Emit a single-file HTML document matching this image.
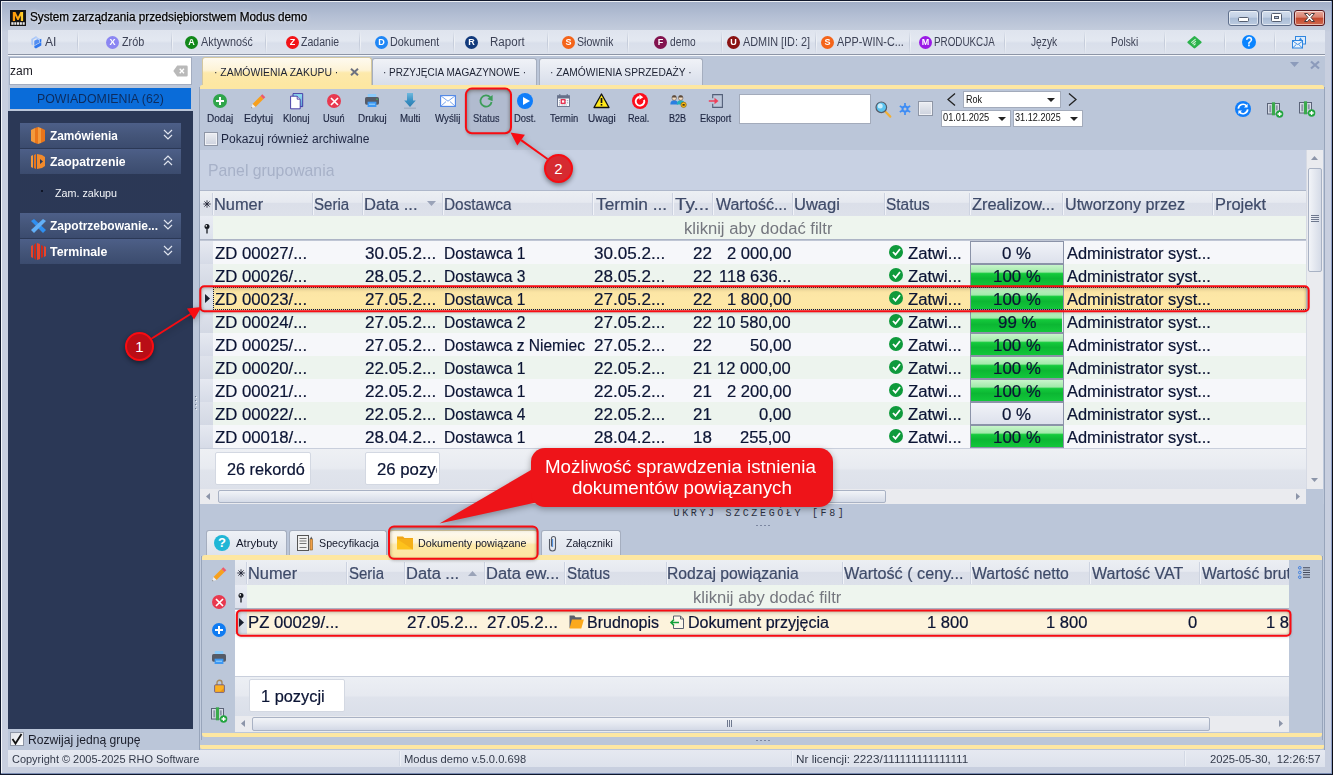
<!DOCTYPE html><html><head><meta charset="utf-8"><title>Modus</title><style>
html,body{margin:0;padding:0;}
body{width:1333px;height:775px;overflow:hidden;position:relative;background:#bbc6d9;font-family:"Liberation Sans",sans-serif;}
div{position:absolute;box-sizing:border-box;}
.t{white-space:nowrap;overflow:hidden;}
svg{position:absolute;overflow:visible;}
</style></head><body>
<div style="left:0px;top:0px;width:1333px;height:775px;background:linear-gradient(#a0adc7 0px,#a6b3cb 4px,#b4bfd4 15px,#c3ccdc 29px,#c8cfdf 31px);border:1px solid #10182c;"></div>
<div style="left:1px;top:1px;width:1331px;height:773px;border:1px solid rgba(255,255,255,.8);border-bottom:none;"></div>
<div style="left:1331px;top:1px;width:1px;height:773px;background:#8c9dc4;"></div>
<div style="left:1332px;top:0px;width:1px;height:775px;background:#0a0c14;"></div>
<div style="left:1px;top:773px;width:1331px;height:1px;background:#7c8db3;"></div>
<div style="left:0px;top:774px;width:1333px;height:1px;background:#10182c;"></div>
<div style="left:8px;top:56px;width:1317px;height:694px;background:#bbc6d9;"></div>
<div style="left:10px;top:10px;width:16px;height:16px;background:#141414;"></div>
<svg style="left:10px;top:10px" width="16" height="16" viewBox="0 0 16 16"><defs><linearGradient id="lg" x1="0" y1="0" x2="1" y2="0"><stop offset="0" stop-color="#ff9a08"/><stop offset=".55" stop-color="#ffa812"/><stop offset="1" stop-color="#ffd830"/></linearGradient></defs><path d="M2.800 11V2.100h2.700l2.450 5 2.450-5h2.700V11h-2.300V5.600L8.600 10H7.300L5.100 5.600V11z" fill="url(#lg)"/><g fill="#e6e6e6"><rect x="1.300" y="12.200" width="2.300" height="2.600"/><rect x="4.300" y="12.200" width="2" height="2.600"/><rect x="7" y="12.200" width="2.200" height="2.600"/><rect x="9.900" y="12.200" width="2" height="2.600"/><rect x="12.600" y="12.200" width="2.100" height="2.600"/></g></svg>
<div class="t" style="left:29.91px;top:9px;font-size:12px;color:#000;line-height:16px;height:16px;transform:scaleX(0.9762);transform-origin:0 50%;-webkit-text-stroke:0.25px;text-shadow:0 0 5px rgba(255,255,255,.8),0 0 3px rgba(255,255,255,.6);overflow:visible;">System zarządzania przedsiębiorstwem Modus demo</div>
<div style="left:1228px;top:10px;width:31px;height:16px;background:linear-gradient(#d3deed 0%,#c3d1e5 45%,#a9bcd6 50%,#bccbe0 100%);border:1px solid #5f6f8c;border-radius:3px;box-shadow:inset 0 0 0 1px rgba(255,255,255,.55);"></div>
<div style="left:1261px;top:10px;width:31px;height:16px;background:linear-gradient(#d3deed 0%,#c3d1e5 45%,#a9bcd6 50%,#bccbe0 100%);border:1px solid #5f6f8c;border-radius:3px;box-shadow:inset 0 0 0 1px rgba(255,255,255,.55);"></div>
<div style="left:1294px;top:10px;width:31px;height:16px;background:linear-gradient(#e9a99c 0%,#d9826f 45%,#c4472d 50%,#cf6a4f 100%);border:1px solid #5a1a20;border-radius:3px;box-shadow:inset 0 0 0 1px rgba(255,255,255,.55);"></div>
<div style="left:1238px;top:17px;width:11px;height:5px;background:#fff;border:1px solid #555e70;border-radius:1.500px;"></div>
<div style="left:1271px;top:13px;width:11px;height:9px;background:#fff;border:1px solid #555e70;border-radius:1.500px;"></div>
<div style="left:1274px;top:16px;width:5px;height:3px;background:#b6c4da;border:1px solid #555e70;"></div>
<svg style="left:1303px;top:12px" width="13" height="11" viewBox="0 0 13 11"><path d="M1.5 1.5h3l2 2.3 2-2.3h3l-3.5 4 3.5 4h-3l-2-2.3-2 2.3h-3l3.5-4z" fill="#fff" stroke="#4b3a3a" stroke-width="1" stroke-linejoin="round"/></svg>
<div style="left:8px;top:30px;width:1317px;height:25px;background:linear-gradient(#dfe4ee 0%,#e3e8f1 45%,#d9dfeb 55%,#dde2ec 100%);border-bottom:1px solid #8d95a6;"></div>
<div style="left:8px;top:55px;width:1317px;height:1px;background:#f4f6fa;"></div>
<div style="left:77px;top:31px;width:1px;height:23px;background:linear-gradient(rgba(200,207,221,0),#c6cddb 40%,#c6cddb 60%,rgba(200,207,221,0));"></div>
<div style="left:78px;top:31px;width:1px;height:23px;background:linear-gradient(rgba(255,255,255,0),#eef1f6 40%,#eef1f6 60%,rgba(255,255,255,0));"></div>
<div style="left:171px;top:31px;width:1px;height:23px;background:linear-gradient(rgba(200,207,221,0),#c6cddb 40%,#c6cddb 60%,rgba(200,207,221,0));"></div>
<div style="left:172px;top:31px;width:1px;height:23px;background:linear-gradient(rgba(255,255,255,0),#eef1f6 40%,#eef1f6 60%,rgba(255,255,255,0));"></div>
<div style="left:265px;top:31px;width:1px;height:23px;background:linear-gradient(rgba(200,207,221,0),#c6cddb 40%,#c6cddb 60%,rgba(200,207,221,0));"></div>
<div style="left:266px;top:31px;width:1px;height:23px;background:linear-gradient(rgba(255,255,255,0),#eef1f6 40%,#eef1f6 60%,rgba(255,255,255,0));"></div>
<div style="left:359px;top:31px;width:1px;height:23px;background:linear-gradient(rgba(200,207,221,0),#c6cddb 40%,#c6cddb 60%,rgba(200,207,221,0));"></div>
<div style="left:360px;top:31px;width:1px;height:23px;background:linear-gradient(rgba(255,255,255,0),#eef1f6 40%,#eef1f6 60%,rgba(255,255,255,0));"></div>
<div style="left:453px;top:31px;width:1px;height:23px;background:linear-gradient(rgba(200,207,221,0),#c6cddb 40%,#c6cddb 60%,rgba(200,207,221,0));"></div>
<div style="left:454px;top:31px;width:1px;height:23px;background:linear-gradient(rgba(255,255,255,0),#eef1f6 40%,#eef1f6 60%,rgba(255,255,255,0));"></div>
<div style="left:547px;top:31px;width:1px;height:23px;background:linear-gradient(rgba(200,207,221,0),#c6cddb 40%,#c6cddb 60%,rgba(200,207,221,0));"></div>
<div style="left:548px;top:31px;width:1px;height:23px;background:linear-gradient(rgba(255,255,255,0),#eef1f6 40%,#eef1f6 60%,rgba(255,255,255,0));"></div>
<div style="left:627px;top:31px;width:1px;height:23px;background:linear-gradient(rgba(200,207,221,0),#c6cddb 40%,#c6cddb 60%,rgba(200,207,221,0));"></div>
<div style="left:628px;top:31px;width:1px;height:23px;background:linear-gradient(rgba(255,255,255,0),#eef1f6 40%,#eef1f6 60%,rgba(255,255,255,0));"></div>
<div style="left:721px;top:31px;width:1px;height:23px;background:linear-gradient(rgba(200,207,221,0),#c6cddb 40%,#c6cddb 60%,rgba(200,207,221,0));"></div>
<div style="left:722px;top:31px;width:1px;height:23px;background:linear-gradient(rgba(255,255,255,0),#eef1f6 40%,#eef1f6 60%,rgba(255,255,255,0));"></div>
<div style="left:815px;top:31px;width:1px;height:23px;background:linear-gradient(rgba(200,207,221,0),#c6cddb 40%,#c6cddb 60%,rgba(200,207,221,0));"></div>
<div style="left:816px;top:31px;width:1px;height:23px;background:linear-gradient(rgba(255,255,255,0),#eef1f6 40%,#eef1f6 60%,rgba(255,255,255,0));"></div>
<div style="left:909px;top:31px;width:1px;height:23px;background:linear-gradient(rgba(200,207,221,0),#c6cddb 40%,#c6cddb 60%,rgba(200,207,221,0));"></div>
<div style="left:910px;top:31px;width:1px;height:23px;background:linear-gradient(rgba(255,255,255,0),#eef1f6 40%,#eef1f6 60%,rgba(255,255,255,0));"></div>
<div style="left:1004px;top:31px;width:1px;height:23px;background:linear-gradient(rgba(200,207,221,0),#c6cddb 40%,#c6cddb 60%,rgba(200,207,221,0));"></div>
<div style="left:1005px;top:31px;width:1px;height:23px;background:linear-gradient(rgba(255,255,255,0),#eef1f6 40%,#eef1f6 60%,rgba(255,255,255,0));"></div>
<div style="left:1084px;top:31px;width:1px;height:23px;background:linear-gradient(rgba(200,207,221,0),#c6cddb 40%,#c6cddb 60%,rgba(200,207,221,0));"></div>
<div style="left:1085px;top:31px;width:1px;height:23px;background:linear-gradient(rgba(255,255,255,0),#eef1f6 40%,#eef1f6 60%,rgba(255,255,255,0));"></div>
<div style="left:1164px;top:31px;width:1px;height:23px;background:linear-gradient(rgba(200,207,221,0),#c6cddb 40%,#c6cddb 60%,rgba(200,207,221,0));"></div>
<div style="left:1165px;top:31px;width:1px;height:23px;background:linear-gradient(rgba(255,255,255,0),#eef1f6 40%,#eef1f6 60%,rgba(255,255,255,0));"></div>
<div style="left:1224px;top:31px;width:1px;height:23px;background:linear-gradient(rgba(200,207,221,0),#c6cddb 40%,#c6cddb 60%,rgba(200,207,221,0));"></div>
<div style="left:1225px;top:31px;width:1px;height:23px;background:linear-gradient(rgba(255,255,255,0),#eef1f6 40%,#eef1f6 60%,rgba(255,255,255,0));"></div>
<div style="left:1274px;top:31px;width:1px;height:23px;background:linear-gradient(rgba(200,207,221,0),#c6cddb 40%,#c6cddb 60%,rgba(200,207,221,0));"></div>
<div style="left:1275px;top:31px;width:1px;height:23px;background:linear-gradient(rgba(255,255,255,0),#eef1f6 40%,#eef1f6 60%,rgba(255,255,255,0));"></div>
<div style="left:106.2px;top:35.5px;width:13.0px;height:13.0px;background:#8b86f2;border-radius:50%;"></div><div class="t" style="left:106.2px;top:35.5px;font-size:9px;color:#fff;line-height:13.0px;height:13.0px;width:13.0px;text-align:center;font-weight:bold;transform:scaleX(1.001);">X</div>
<div class="t" style="left:121.56px;top:34px;font-size:12px;color:#3d4256;line-height:16px;height:16px;transform:scaleX(0.9000);transform-origin:0 50%;">Zrób</div>
<div style="left:185.2px;top:35.5px;width:13.0px;height:13.0px;background:#12881a;border-radius:50%;"></div><div class="t" style="left:185.2px;top:35.5px;font-size:9px;color:#fff;line-height:13.0px;height:13.0px;width:13.0px;text-align:center;font-weight:bold;transform:scaleX(1.001);">A</div>
<div class="t" style="left:200.90px;top:34px;font-size:12px;color:#3d4256;line-height:16px;height:16px;transform:scaleX(0.9049);transform-origin:0 50%;">Aktywność</div>
<div style="left:286.4px;top:35.5px;width:13.0px;height:13.0px;background:#f21418;border-radius:50%;"></div><div class="t" style="left:286.4px;top:35.5px;font-size:9px;color:#fff;line-height:13.0px;height:13.0px;width:13.0px;text-align:center;font-weight:bold;transform:scaleX(1.001);">Z</div>
<div class="t" style="left:301.37px;top:34px;font-size:12px;color:#3d4256;line-height:16px;height:16px;transform:scaleX(0.8798);transform-origin:0 50%;">Zadanie</div>
<div style="left:375.2px;top:35.5px;width:13.0px;height:13.0px;background:#1f86f5;border-radius:50%;"></div><div class="t" style="left:375.2px;top:35.5px;font-size:9px;color:#fff;line-height:13.0px;height:13.0px;width:13.0px;text-align:center;font-weight:bold;transform:scaleX(1.001);">D</div>
<div class="t" style="left:389.50px;top:34px;font-size:12px;color:#3d4256;line-height:16px;height:16px;transform:scaleX(0.8986);transform-origin:0 50%;">Dokument</div>
<div style="left:465.3px;top:35.5px;width:13.0px;height:13.0px;background:#123a7c;border-radius:50%;"></div><div class="t" style="left:465.3px;top:35.5px;font-size:9px;color:#fff;line-height:13.0px;height:13.0px;width:13.0px;text-align:center;font-weight:bold;transform:scaleX(1.001);">R</div>
<div class="t" style="left:490.34px;top:34px;font-size:12px;color:#3d4256;line-height:16px;height:16px;transform:scaleX(0.9631);transform-origin:0 50%;">Raport</div>
<div style="left:562.2px;top:35.5px;width:13.0px;height:13.0px;background:#f4641a;border-radius:50%;"></div><div class="t" style="left:562.2px;top:35.5px;font-size:9px;color:#fff;line-height:13.0px;height:13.0px;width:13.0px;text-align:center;font-weight:bold;transform:scaleX(1.001);">S</div>
<div class="t" style="left:577.06px;top:34px;font-size:12px;color:#3d4256;line-height:16px;height:16px;transform:scaleX(0.8830);transform-origin:0 50%;">Słownik</div>
<div style="left:654.3px;top:35.5px;width:13.0px;height:13.0px;background:#82134f;border-radius:50%;"></div><div class="t" style="left:654.3px;top:35.5px;font-size:9px;color:#fff;line-height:13.0px;height:13.0px;width:13.0px;text-align:center;font-weight:bold;transform:scaleX(1.001);">F</div>
<div class="t" style="left:669.77px;top:34px;font-size:12px;color:#3d4256;line-height:16px;height:16px;transform:scaleX(0.8545);transform-origin:0 50%;">demo</div>
<div style="left:727.2px;top:35.5px;width:13.0px;height:13.0px;background:#8a1212;border-radius:50%;"></div><div class="t" style="left:727.2px;top:35.5px;font-size:9px;color:#fff;line-height:13.0px;height:13.0px;width:13.0px;text-align:center;font-weight:bold;transform:scaleX(1.001);">U</div>
<div class="t" style="left:743.00px;top:34px;font-size:12px;color:#3d4256;line-height:16px;height:16px;transform:scaleX(0.9066);transform-origin:0 50%;">ADMIN [ID: 2]</div>
<div style="left:821.4px;top:35.5px;width:13.0px;height:13.0px;background:#f4641a;border-radius:50%;"></div><div class="t" style="left:821.4px;top:35.5px;font-size:9px;color:#fff;line-height:13.0px;height:13.0px;width:13.0px;text-align:center;font-weight:bold;transform:scaleX(1.001);">S</div>
<div class="t" style="left:837.00px;top:34px;font-size:12px;color:#3d4256;line-height:16px;height:16px;transform:scaleX(0.9029);transform-origin:0 50%;">APP-WIN-C...</div>
<div style="left:919.4px;top:35.5px;width:13.0px;height:13.0px;background:#9a1ae6;border-radius:50%;"></div><div class="t" style="left:919.4px;top:35.5px;font-size:9px;color:#fff;line-height:13.0px;height:13.0px;width:13.0px;text-align:center;font-weight:bold;transform:scaleX(1.001);">M</div>
<div class="t" style="left:933.58px;top:34px;font-size:12px;color:#3d4256;line-height:16px;height:16px;transform:scaleX(0.8205);transform-origin:0 50%;">PRODUKCJA</div>
<div class="t" style="left:44.90px;top:34px;font-size:12px;color:#3d4256;line-height:16px;height:16px;transform:scaleX(1.0043);transform-origin:0 50%;">AI</div>
<div class="t" style="left:1031.19px;top:34px;font-size:12px;color:#3d4256;line-height:16px;height:16px;transform:scaleX(0.8521);transform-origin:0 50%;">Język</div>
<div class="t" style="left:1110.65px;top:34px;font-size:12px;color:#3d4256;line-height:16px;height:16px;transform:scaleX(0.8494);transform-origin:0 50%;">Polski</div>
<svg style="left:31px;top:36px" width="11" height="13" viewBox="0 0 11 13"><path d="M.3 3l4.700-2.700 1.500.9-4.400 2.500v5.800l-1.800-1z" fill="#a8c6f8"/><path d="M4.500.5l5.800 3v1.500l-5.800-3z" fill="#b4cefa"/><path d="M3.300 4.800l3-1.600 1.800 1v2.600l-2.400 1.300-2.400 1.300z" fill="#3a7ff2" opacity=".85"/><path d="M8.700 3.600l1.600-.8v3l-1.600 1.400z" fill="#2f78f0"/><path d="M3.300 10l7-3.800v3.300l-5.400 3-1.600-.9z" fill="#2f78f0"/></svg>
<svg style="left:1186.500px;top:35.800px" width="15" height="12.500" viewBox="0 0 15 12.500"><path d="M6.600 .5a1.300 1.300 0 0 1 1.800 0l5.900 5a1 1 0 0 1 0 1.500l-5.900 5a1.300 1.300 0 0 1-1.800 0l-5.900-5a1 1 0 0 1 0-1.500z" fill="#2bb24c"/><path d="M4.600 6.300l3.600-3M5.800 7.700l2.800-2.300M7 9l1.300-1.100" stroke="#d4f3da" stroke-width="1.100" stroke-linecap="round"/></svg>
<div style="left:1242px;top:35px;width:14px;height:14px;background:#0a84ff;border-radius:50%;"></div>
<div class="t" style="left:1242px;top:35px;font-size:12px;color:#fff;line-height:14px;height:14px;width:14px;text-align:center;transform:scaleX(1.001);-webkit-text-stroke:0.3px;">?</div>
<svg style="left:1292px;top:36px" width="15" height="13" viewBox="0 0 15 13"><rect x="3.5" y=".5" width="10" height="7.5" fill="#dcebfb" stroke="#2f86e0"/><rect x=".5" y="4.5" width="10" height="7.5" fill="#eaf3fd" stroke="#2f86e0"/><path d="M.8 5l5 3.6 5-3.6M.8 11.8l3.6-3.4M10.2 11.8l-3.6-3.4" fill="none" stroke="#2f86e0" stroke-width=".9"/><path d="M8.5 1.8v3M7 3.3h3" stroke="#2f86e0" stroke-width=".9"/></svg>
<div style="left:9px;top:57px;width:183px;height:28px;background:#fff;border:1px solid #a3adc0;"></div>
<div class="t" style="left:10.34px;top:62px;font-size:13px;color:#1a1a22;line-height:17px;height:17px;transform:scaleX(0.9247);transform-origin:0 50%;">zam</div>
<svg style="left:173px;top:65px" width="15" height="12" viewBox="0 0 15 12"><path d="M4.2.5h9.3a1.2 1.2 0 0 1 1.200 1.200v8.600a1.2 1.2 0 0 1-1.200 1.200h-9.300l-3.900-5.500z" fill="#b9b9b9"/><path d="M6.700 3.700l4.300 4.600M11 3.700l-4.300 4.600" stroke="#fff" stroke-width="1.300"/></svg>
<div style="left:10px;top:88px;width:181px;height:21px;background:#0a6cd9;"></div>
<div class="t" style="left:36.55px;top:90px;font-size:13px;color:#0d2c5e;line-height:17px;height:17px;transform:scaleX(0.9487);transform-origin:0 50%;">POWIADOMIENIA (62)</div>
<div style="left:8px;top:111px;width:185px;height:618px;background:#2b3856;"></div>
<div style="left:20px;top:123px;width:161px;height:25px;background:linear-gradient(#4d5f88 0%,#445579 50%,#3b4b6e 100%);"></div><div class="t" style="left:49.76px;top:127px;font-size:13px;color:#fff;line-height:17px;height:17px;font-weight:bold;transform:scaleX(0.9118);transform-origin:0 50%;">Zamówienia</div><svg style="left:0;top:0" width="1" height="1"><path d="M164 130l4 4 4-4M164 135l4 4 4-4" fill="none" stroke="#dfe4ef" stroke-width="1.2"/></svg>
<div style="left:20px;top:149px;width:161px;height:25px;background:linear-gradient(#4d5f88 0%,#445579 50%,#3b4b6e 100%);"></div><div class="t" style="left:49.75px;top:153px;font-size:13px;color:#fff;line-height:17px;height:17px;font-weight:bold;transform:scaleX(0.9434);transform-origin:0 50%;">Zaopatrzenie</div><svg style="left:0;top:0" width="1" height="1"><path d="M164 160l4-4 4 4M164 165l4-4 4 4" fill="none" stroke="#dfe4ef" stroke-width="1.2"/></svg>
<div style="left:20px;top:174px;width:161px;height:39px;background:#293552;background-image:radial-gradient(#323f5e 0.6px,transparent 0.75px);background-size:2px 2px;"></div>
<div style="left:41px;top:190px;width:2px;height:2px;background:#0f1526;"></div>
<div class="t" style="left:55.13px;top:186px;font-size:11px;color:#f4f6fa;line-height:14px;height:14px;transform:scaleX(0.9758);transform-origin:0 50%;">Zam. zakupu</div>
<div style="left:20px;top:213px;width:161px;height:25px;background:linear-gradient(#4d5f88 0%,#445579 50%,#3b4b6e 100%);"></div><div class="t" style="left:49.75px;top:217px;font-size:13px;color:#fff;line-height:17px;height:17px;font-weight:bold;transform:scaleX(0.9227);transform-origin:0 50%;">Zapotrzebowanie...</div><svg style="left:0;top:0" width="1" height="1"><path d="M164 220l4 4 4-4M164 225l4 4 4-4" fill="none" stroke="#dfe4ef" stroke-width="1.2"/></svg>
<div style="left:20px;top:239px;width:161px;height:25px;background:linear-gradient(#4d5f88 0%,#445579 50%,#3b4b6e 100%);"></div><div class="t" style="left:49.98px;top:243px;font-size:13px;color:#fff;line-height:17px;height:17px;font-weight:bold;transform:scaleX(0.9499);transform-origin:0 50%;">Terminale</div><svg style="left:0;top:0" width="1" height="1"><path d="M164 246l4 4 4-4M164 251l4 4 4-4" fill="none" stroke="#dfe4ef" stroke-width="1.2"/></svg>
<svg style="left:31px;top:127px" width="14" height="17" viewBox="0 0 14 17"><path d="M0 3l4-2v15l-4-2z" fill="#f39a3c"/><path d="M4 1l3-1v17l-3-1z" fill="#e9751a"/><path d="M7 0l3 1v15l-3 1z" fill="#f39a3c"/><path d="M10 1l4 2v11l-4 2z" fill="#e9751a"/></svg>
<svg style="left:31px;top:153px" width="15" height="17" viewBox="0 0 15 17"><path d="M0 3l2-1v13l-2-1z" fill="#f39a3c"/><path d="M3 2l2-1v15l-2-1z" fill="#e9751a"/><path d="M6 1l5 1 3 2v9l-3 2-5 1z" fill="#f08a2c"/><path d="M9 6l3 2.500-3 2.500z" fill="#2b3856"/></svg>
<svg style="left:29.500px;top:217.500px" width="17" height="16" viewBox="0 0 17 16"><path d="M1 3l3-2 12 11-3 3z" fill="#2f8ff0"/><path d="M13 1l3 2-12 12-3-3z" fill="#63b0f7"/></svg>
<svg style="left:31px;top:242.500px" width="15" height="17" viewBox="0 0 15 17"><path d="M0 3l2-1v13l-2-1z" fill="#e8452c"/><path d="M3 2l2-2v17l-2-2z" fill="#c92a1a"/><path d="M6 0l3 1v15l-3 1z" fill="#e8452c"/><path d="M10 2l2 1v11l-2 1z" fill="#c92a1a"/><path d="M13 3l2 1v9l-2 1z" fill="#e8452c"/></svg>
<div style="left:10px;top:732px;width:14px;height:14px;background:linear-gradient(135deg,#dfe2e8,#fff);border:1px solid #8e96a6;"></div>
<svg style="left:11px;top:733px" width="12" height="12" viewBox="0 0 12 12"><path d="M1.500 6l3 4.500 6-9.500" fill="none" stroke="#111" stroke-width="1.800"/></svg>
<div class="t" style="left:27.89px;top:732px;font-size:12px;color:#1a1d2a;line-height:16px;height:16px;transform:scaleX(1.0102);transform-origin:0 50%;">Rozwijaj jedną grupę</div>
<div style="left:195px;top:396px;width:1px;height:1px;background:#6d7890;"></div>
<div style="left:196px;top:397px;width:1px;height:1px;background:#eef1f6;"></div>
<div style="left:195px;top:400px;width:1px;height:1px;background:#6d7890;"></div>
<div style="left:196px;top:401px;width:1px;height:1px;background:#eef1f6;"></div>
<div style="left:195px;top:404px;width:1px;height:1px;background:#6d7890;"></div>
<div style="left:196px;top:405px;width:1px;height:1px;background:#eef1f6;"></div>
<div style="left:195px;top:408px;width:1px;height:1px;background:#6d7890;"></div>
<div style="left:196px;top:409px;width:1px;height:1px;background:#eef1f6;"></div>
<div style="left:8px;top:750px;width:1317px;height:17px;background:linear-gradient(#e6e9f1,#dde2ec);"></div>
<div class="t" style="left:12.20px;top:752px;font-size:11px;color:#333a4a;line-height:14px;height:14px;transform:scaleX(0.9969);transform-origin:0 50%;">Copyright © 2005-2025 RHO Software</div>
<div class="t" style="left:403.51px;top:752px;font-size:11px;color:#333a4a;line-height:14px;height:14px;transform:scaleX(1.0153);transform-origin:0 50%;">Modus demo v.5.0.0.698</div>
<div class="t" style="left:795.77px;top:752px;font-size:11px;color:#333a4a;line-height:14px;height:14px;transform:scaleX(1.0657);transform-origin:0 50%;">Nr licencji: 2223/111111111111111</div>
<div class="t" style="left:1209.79px;top:752px;font-size:11px;color:#333a4a;line-height:14px;height:14px;transform:scaleX(1.0208);transform-origin:0 50%;">2025-05-30,&nbsp; 12:26:57</div>
<div style="left:399px;top:751px;width:1px;height:15px;background:#d3d9e5;"></div>
<div style="left:400px;top:751px;width:1px;height:15px;background:#edf0f6;"></div>
<div style="left:791px;top:751px;width:1px;height:15px;background:#d3d9e5;"></div>
<div style="left:792px;top:751px;width:1px;height:15px;background:#edf0f6;"></div>
<div style="left:1184px;top:751px;width:1px;height:15px;background:#d3d9e5;"></div>
<div style="left:1185px;top:751px;width:1px;height:15px;background:#edf0f6;"></div>
<div style="left:372px;top:58px;width:165px;height:27px;background:linear-gradient(#f0f2f7,#d8deea);border:1px solid #a5aebf;border-bottom:none;border-radius:3px 3px 0 0;"></div><div class="t" style="left:383.16px;top:65px;font-size:11px;color:#1d2233;line-height:14px;height:14px;transform:scaleX(0.9113);transform-origin:0 50%;">· PRZYJĘCIA MAGAZYNOWE ·</div>
<div style="left:539px;top:58px;width:164px;height:27px;background:linear-gradient(#f0f2f7,#d8deea);border:1px solid #a5aebf;border-bottom:none;border-radius:3px 3px 0 0;"></div><div class="t" style="left:549.84px;top:65px;font-size:11px;color:#1d2233;line-height:14px;height:14px;transform:scaleX(0.9287);transform-origin:0 50%;">· ZAMÓWIENIA SPRZEDAŻY ·</div>
<div style="left:202px;top:57px;width:170px;height:28px;background:linear-gradient(#fefaf0 0%,#fdf3d6 45%,#fde9ab 55%,#fde7a2 100%);border:1px solid #d3c79f;border-bottom:none;border-radius:3px 3px 0 0;"></div>
<div class="t" style="left:214.42px;top:65px;font-size:11px;color:#1d2233;line-height:14px;height:14px;transform:scaleX(0.9458);transform-origin:0 50%;">· ZAMÓWIENIA ZAKUPU ·</div>
<svg style="left:350px;top:68px" width="9" height="8" viewBox="0 0 9 8"><path d="M1 .8l7 6.400M8 .8l-7 6.400" stroke="#6c7080" stroke-width="2"/></svg>
<div style="left:200px;top:85px;width:1124px;height:4px;background:#fde7a2;border-radius:2px 2px 0 0;"></div>
<svg style="left:1290px;top:62px" width="9" height="5" viewBox="0 0 9 5"><path d="M0 0h9l-4.500 5z" fill="#8c9bbb"/></svg>
<svg style="left:1310px;top:61px" width="10" height="8" viewBox="0 0 10 8"><path d="M1 .5l8 7M9 .5l-8 7" stroke="#8c9bbb" stroke-width="2.200"/></svg>
<div class="t" style="left:206.65px;top:112px;font-size:10px;color:#1d2540;line-height:13px;height:13px;transform:scaleX(1.0017);transform-origin:0 50%;-webkit-text-stroke:0.15px;">Dodaj</div>
<div class="t" style="left:243.72px;top:112px;font-size:10px;color:#1d2540;line-height:13px;height:13px;transform:scaleX(1.0453);transform-origin:0 50%;-webkit-text-stroke:0.15px;">Edytuj</div>
<div class="t" style="left:282.78px;top:112px;font-size:10px;color:#1d2540;line-height:13px;height:13px;transform:scaleX(0.9544);transform-origin:0 50%;-webkit-text-stroke:0.15px;">Klonuj</div>
<div class="t" style="left:323.20px;top:112px;font-size:10px;color:#1d2540;line-height:13px;height:13px;transform:scaleX(0.9268);transform-origin:0 50%;-webkit-text-stroke:0.15px;">Usuń</div>
<div class="t" style="left:357.66px;top:112px;font-size:10px;color:#1d2540;line-height:13px;height:13px;transform:scaleX(0.9925);transform-origin:0 50%;-webkit-text-stroke:0.15px;">Drukuj</div>
<div class="t" style="left:400.17px;top:112px;font-size:10px;color:#1d2540;line-height:13px;height:13px;transform:scaleX(0.9667);transform-origin:0 50%;-webkit-text-stroke:0.15px;">Multi</div>
<div class="t" style="left:434.90px;top:112px;font-size:10px;color:#1d2540;line-height:13px;height:13px;transform:scaleX(0.9735);transform-origin:0 50%;-webkit-text-stroke:0.15px;">Wyślij</div>
<div class="t" style="left:472.83px;top:112px;font-size:10px;color:#1d2540;line-height:13px;height:13px;transform:scaleX(0.9416);transform-origin:0 50%;-webkit-text-stroke:0.15px;">Status</div>
<div class="t" style="left:514.09px;top:112px;font-size:10px;color:#1d2540;line-height:13px;height:13px;transform:scaleX(0.9425);transform-origin:0 50%;-webkit-text-stroke:0.15px;">Dost.</div>
<div class="t" style="left:549.76px;top:112px;font-size:10px;color:#1d2540;line-height:13px;height:13px;transform:scaleX(0.9434);transform-origin:0 50%;-webkit-text-stroke:0.15px;">Termin</div>
<div class="t" style="left:587.65px;top:112px;font-size:10px;color:#1d2540;line-height:13px;height:13px;transform:scaleX(0.9999);transform-origin:0 50%;-webkit-text-stroke:0.15px;">Uwagi</div>
<div class="t" style="left:628.21px;top:112px;font-size:10px;color:#1d2540;line-height:13px;height:13px;transform:scaleX(0.9145);transform-origin:0 50%;-webkit-text-stroke:0.15px;">Real.</div>
<div class="t" style="left:668.82px;top:112px;font-size:10px;color:#1d2540;line-height:13px;height:13px;transform:scaleX(0.9076);transform-origin:0 50%;-webkit-text-stroke:0.15px;">B2B</div>
<div class="t" style="left:699.61px;top:112px;font-size:10px;color:#1d2540;line-height:13px;height:13px;transform:scaleX(0.9237);transform-origin:0 50%;-webkit-text-stroke:0.15px;">Eksport</div>
<div style="left:213px;top:94px;width:14px;height:14px;background:#2fa54a;border-radius:50%;"></div>
<div style="left:216px;top:100px;width:8px;height:2px;background:#fff;"></div>
<div style="left:219px;top:97px;width:2px;height:8px;background:#fff;"></div>
<svg style="left:250px;top:93px" width="16" height="16" viewBox="0 0 16 16"><path d="M2.500 11l8-8 3 3-8 8z" fill="#f7a01d"/><path d="M10.500 3l1.800-1.800 3 3L13.500 6z" fill="#ef5a6a"/><path d="M2.500 11l3 3-4.300 1.300z" fill="#f4f0ea"/><path d="M1.200 15.300l1.300-.4-.9-.9z" fill="#555"/></svg>
<svg style="left:289.500px;top:92.700px" width="14" height="17" viewBox="0 0 14 17"><defs><linearGradient id="kg" x1="0" y1="0" x2="0" y2="1"><stop offset="0" stop-color="#93e0f2"/><stop offset="1" stop-color="#5f9fd6"/></linearGradient></defs><path d="M3 .6h9.700v13h-9.700z" fill="url(#kg)" stroke="#3a2fa0" stroke-width=".9"/><path d="M.6 3.200h6.600l3 3v9.600h-9.600z" fill="#fff" stroke="#3a2fa0" stroke-width=".9"/><path d="M7.200 3.200v3h3" fill="#e6e9f5" stroke="#3a2fa0" stroke-width=".8"/></svg>
<div style="left:327px;top:94px;width:14px;height:14px;background:#e8394f;border-radius:50%;"></div>
<svg style="left:329.500px;top:96.500px" width="9" height="9" viewBox="0 0 9 9"><path d="M1 1l7 7M8 1l-7 7" stroke="#fff" stroke-width="1.700"/></svg>
<svg style="left:365px;top:94px" width="14" height="13" viewBox="0 0 14 13"><rect x="2.800" y="0" width="8.400" height="4" fill="#8ccbfa"/><rect x="0" y="3" width="14" height="7.700" rx="1.600" fill="#555b67"/><rect x="2.600" y="7.700" width="8.800" height="5.300" fill="#3d98f3"/><rect x="4" y="9.600" width="6" height="1.300" fill="#8ccbfa"/><rect x="11.300" y="4.600" width="1.300" height="1.200" fill="#3fbf5a"/></svg>
<svg style="left:404px;top:93px" width="12" height="16" viewBox="0 0 12 16"><defs><linearGradient id="mg" x1="0" y1="0" x2="0" y2="1"><stop offset="0" stop-color="#6fb9de"/><stop offset=".5" stop-color="#3b93c6"/><stop offset="1" stop-color="#2b7cae"/></linearGradient></defs><path d="M3 0h6v7.500h2.800l-5.800 6.500-5.800-6.500h2.800z" fill="url(#mg)"/><rect x="0" y="14.600" width="12" height="1.200" fill="#9aa6bb" opacity=".8"/></svg>
<svg style="left:440px;top:95px" width="16" height="12" viewBox="0 0 16 12"><rect x=".6" y=".6" width="14.800" height="10.800" fill="#fff" stroke="#4f86e6" stroke-width="1.100"/><path d="M.8.800l7.200 5.400 7.200-5.400M.8 11.200l5.200-4.600M15.200 11.200l-5.200-4.600" fill="none" stroke="#6a98ea" stroke-width=".9"/></svg>
<svg style="left:477.800px;top:92.600px" width="16" height="16" viewBox="0 0 16 16"><path d="M12.300 4.400A5.600 5.600 0 1 0 13.550 9" fill="none" stroke="#3aa455" stroke-width="1.800"/><path d="M9.300 6l5.300-3.900v6.200z" fill="#3aa455"/></svg>
<div style="left:517px;top:93px;width:16px;height:16px;background:#0f7dfa;border-radius:50%;"></div>
<svg style="left:522.500px;top:97.300px" width="7" height="8" viewBox="0 0 7 8"><path d="M0 0l7 4-7 4z" fill="#fff"/></svg>
<svg style="left:557px;top:94px" width="13" height="13" viewBox="0 0 13 13"><rect x=".5" y="1.700" width="12" height="10.800" fill="#fbfbfd" stroke="#66718a" stroke-width=".9"/><rect x=".5" y="1.700" width="12" height="2.800" fill="#66718a"/><path d="M2.800 0v2.500M10.200 0v2.500" stroke="#66718a" stroke-width="1.100"/><g fill="#a9b0c0"><rect x="2" y="6" width="1.200" height="1.200"/><rect x="8" y="6" width="1.200" height="1.200"/><rect x="10" y="6" width="1.200" height="1.200"/><rect x="2" y="8.200" width="1.200" height="1.200"/><rect x="8" y="8.200" width="1.200" height="1.200"/><rect x="10" y="8.200" width="1.200" height="1.200"/><rect x="2" y="10.300" width="1.200" height="1.200"/><rect x="4.500" y="10.300" width="1.200" height="1.200"/><rect x="6.500" y="10.300" width="1.200" height="1.200"/><rect x="8.500" y="10.300" width="1.200" height="1.200"/></g><rect x="4.300" y="5.700" width="3.600" height="3.600" fill="#fff" stroke="#e8294a" stroke-width="1.300"/></svg>
<svg style="left:593px;top:93px" width="17" height="15" viewBox="0 0 17 15"><path d="M8.500 1l7.500 13.500h-15z" fill="#ffe81a" stroke="#111" stroke-width="1.300" stroke-linejoin="round"/><path d="M8.500 5v5" stroke="#111" stroke-width="1.700"/><rect x="7.700" y="11" width="1.600" height="1.600" fill="#111"/></svg>
<div style="left:631.7px;top:93px;width:16px;height:16px;background:#fb0d1b;border-radius:50%;"></div>
<svg style="left:631.700px;top:93px" width="16" height="16" viewBox="0 0 16 16"><path d="M12.040 6.830A4.300 4.300 0 1 1 7.600 4.020" fill="none" stroke="#fff" stroke-width="1.900"/><path d="M7.400 1.500l3.800 2.700-3.800 2.500z" fill="#fff"/></svg>
<svg style="left:670px;top:94.500px" width="17" height="13" viewBox="0 0 17 13"><path d="M.3 9.500c0-3 1.500-4.300 3.900-4.300s3.900 1.300 3.900 4.300z" fill="#2a7fe2"/><path d="M6.800 9.500c0-3 1.500-4.300 3.900-4.300s3.900 1.300 3.900 4.300z" fill="#20aebf"/><circle cx="4.200" cy="3" r="2.300" fill="#f4dcc2" stroke="#5b4a3c" stroke-width=".5"/><path d="M1.900 2.600a2.300 2.300 0 0 1 4.600 0c-1.500-.2-3-.2-4.600 0z" fill="#5b4a3c"/><circle cx="10.700" cy="3" r="2.300" fill="#f4dcc2" stroke="#5b4a3c" stroke-width=".5"/><path d="M8.400 2.600a2.300 2.300 0 0 1 4.600 0c-1.500-.2-3-.2-4.600 0z" fill="#5b4a3c"/><circle cx="13.600" cy="9.800" r="2.700" fill="#f6b818" stroke="#7a5a08" stroke-width=".6"/><rect x="12.500" y="9" width="2.200" height="1.700" fill="#4a3a10"/></svg>
<svg style="left:708px;top:94px" width="15" height="14" viewBox="0 0 15 14"><path d="M4.700 4.200v-3.600h9.700v12.800h-9.700v-3.600" fill="none" stroke="#525e77" stroke-width="1.100"/><path d="M.8 7h7" stroke="#ee3d57" stroke-width="1.500"/><path d="M6.500 3.800l4 3.200-4 3.200z" fill="#ee3d57"/></svg>
<div style="left:739px;top:94px;width:132px;height:30px;background:#fff;border:1px solid #a3abbb;"></div>
<svg style="left:875px;top:101px" width="17" height="17" viewBox="0 0 17 17"><path d="M10.500 10.800l4.800 4.800" stroke="#f2b035" stroke-width="2.200" stroke-linecap="round"/><circle cx="6.300" cy="6.300" r="5.300" fill="#5cc4f0" stroke="#555b68" stroke-width="1.200"/><circle cx="5.200" cy="5" r="2.500" fill="#c9eefc"/></svg>
<svg style="left:899px;top:103px" width="12" height="12" viewBox="0 0 12 12"><g stroke="#3d8cf5" stroke-width="1.700"><path d="M6 0v12M.8 3l10.400 6M.8 9l10.400-6"/></g><circle cx="6" cy="6" r="3.500" fill="#3d8cf5"/><circle cx="6" cy="6" r="1.500" fill="#bbc6d9"/></svg>
<div style="left:918px;top:101px;width:15px;height:15px;background:linear-gradient(#eceef2,#cdd2de);border:1px solid #8e96a6;box-shadow:inset 0 0 0 1px #f1f2f6;"></div>
<svg style="left:947px;top:93px" width="9" height="13" viewBox="0 0 9 13"><path d="M8 .5l-7 6 7 6" fill="none" stroke="#222" stroke-width="1.300"/></svg>
<svg style="left:1068px;top:93px" width="9" height="13" viewBox="0 0 9 13"><path d="M1 .5l7 6-7 6" fill="none" stroke="#222" stroke-width="1.300"/></svg>
<div style="left:963px;top:91px;width:98px;height:17px;background:#fff;border:1px solid #a3abbb;"></div>
<div class="t" style="left:966.13px;top:93px;font-size:10px;color:#111;line-height:13px;height:13px;transform:scaleX(0.8994);transform-origin:0 50%;">Rok</div>
<svg style="left:1047px;top:98px" width="8" height="4" viewBox="0 0 8 4"><path d="M0 0h8l-4 4z" fill="#222"/></svg>
<div style="left:941px;top:110px;width:70px;height:17px;background:#fff;border:1px solid #a3abbb;"></div>
<div class="t" style="left:942.85px;top:111px;font-size:10px;color:#111;line-height:13px;height:13px;transform:scaleX(0.9238);transform-origin:0 50%;">01.01.2025</div>
<svg style="left:998px;top:117px" width="8" height="4" viewBox="0 0 8 4"><path d="M0 0h8l-4 4z" fill="#222"/></svg>
<div style="left:1013px;top:110px;width:70px;height:17px;background:#fff;border:1px solid #a3abbb;"></div>
<div class="t" style="left:1015.06px;top:111px;font-size:10px;color:#111;line-height:13px;height:13px;transform:scaleX(0.9136);transform-origin:0 50%;">31.12.2025</div>
<svg style="left:1070px;top:117px" width="8" height="4" viewBox="0 0 8 4"><path d="M0 0h8l-4 4z" fill="#222"/></svg>
<div style="left:1235.2px;top:100.9px;width:16px;height:16px;background:#0f7dfa;border-radius:50%;"></div>
<svg style="left:1235.200px;top:100.900px" width="16" height="16" viewBox="0 0 16 16"><path d="M3.300 7.600a4.700 4.700 0 0 1 8.300-2.600M12.700 8.400a4.700 4.700 0 0 1-8.300 2.600" fill="none" stroke="#fff" stroke-width="1.700"/><path d="M12.600 2.800v3.600h-3.600zM3.400 13.200v-3.600h3.600z" fill="#fff"/></svg>
<svg style="left:1267px;top:101.5px" width="17" height="16" viewBox="0 0 17 16"><rect x=".5" y="1.500" width="12" height="10.500" fill="#d6dbe6" stroke="#5a6378" stroke-width="1"/><rect x="2.300" y="3.300" width="1.800" height="7" fill="#8d95a8"/><rect x="8.900" y="3.300" width="1.800" height="5" fill="#8d95a8"/><rect x="4.900" y=".3" width="3.200" height="13" fill="#3aaa4c"/><circle cx="12.600" cy="12" r="3.700" fill="#22a53f"/><path d="M10.500 12h4.200M12.600 9.900v4.200" stroke="#fff" stroke-width="1.400"/></svg>
<svg style="left:1299px;top:100.5px" width="17" height="16" viewBox="0 0 17 16"><rect x=".5" y="1.500" width="12" height="10.500" fill="#d6dbe6" stroke="#5a6378" stroke-width="1"/><rect x="2.300" y="3.300" width="1.800" height="7" fill="#8d95a8"/><rect x="8.900" y="3.300" width="1.800" height="5" fill="#8d95a8"/><rect x="4.900" y=".3" width="3.200" height="13" fill="#3aaa4c"/><circle cx="12.600" cy="12" r="3.700" fill="#22a53f"/><path d="M10.500 12h4.200M12.600 9.900v4.200" stroke="#fff" stroke-width="1.400"/></svg>
<div style="left:204px;top:132px;width:14px;height:14px;background:linear-gradient(#eceef2,#cdd2de);border:1px solid #8e96a6;box-shadow:inset 0 0 0 1px #f1f2f6;"></div>
<div class="t" style="left:221.40px;top:131px;font-size:12px;color:#1d2540;line-height:16px;height:16px;transform:scaleX(1.0027);transform-origin:0 50%;">Pokazuj również archiwalne</div>
<div style="left:200px;top:150px;width:1125px;height:42px;background:#c8d1e3;"></div>
<div style="left:199px;top:87px;width:1px;height:663px;background:#98a5bb;"></div>
<div class="t" style="left:208.02px;top:160px;font-size:17px;color:#a7b1c8;line-height:22px;height:22px;transform:scaleX(0.9291);transform-origin:0 50%;">Panel grupowania</div>
<div style="left:200px;top:190px;width:1106px;height:26px;background:linear-gradient(#eceff3 0%,#e6e9f0 45%,#dbdfe9 50%,#dde1ea 100%);border-top:1px solid #aeb7ca;"></div>
<div style="left:212px;top:193px;width:1px;height:22px;background:#cdd3e0;"></div>
<div style="left:213px;top:193px;width:1px;height:22px;background:#f1f3f8;"></div>
<div class="t" style="left:213.82px;top:194px;font-size:16px;color:#3e4a68;line-height:21px;height:21px;transform:scaleX(1.0235);transform-origin:0 50%;-webkit-text-stroke:0.2px;">Numer</div>
<div style="left:312px;top:193px;width:1px;height:22px;background:#cdd3e0;"></div>
<div style="left:313px;top:193px;width:1px;height:22px;background:#f1f3f8;"></div>
<div class="t" style="left:314.39px;top:194px;font-size:16px;color:#3e4a68;line-height:21px;height:21px;transform:scaleX(0.9418);transform-origin:0 50%;-webkit-text-stroke:0.2px;">Seria</div>
<div style="left:362px;top:193px;width:1px;height:22px;background:#cdd3e0;"></div>
<div style="left:363px;top:193px;width:1px;height:22px;background:#f1f3f8;"></div>
<div class="t" style="left:364.10px;top:194px;font-size:16px;color:#3e4a68;line-height:21px;height:21px;transform:scaleX(1.0373);transform-origin:0 50%;-webkit-text-stroke:0.2px;">Data ...</div>
<div style="left:442px;top:193px;width:1px;height:22px;background:#cdd3e0;"></div>
<div style="left:443px;top:193px;width:1px;height:22px;background:#f1f3f8;"></div>
<div class="t" style="left:444.30px;top:194px;font-size:16px;color:#3e4a68;line-height:21px;height:21px;transform:scaleX(0.9609);transform-origin:0 50%;-webkit-text-stroke:0.2px;">Dostawca</div>
<div style="left:592px;top:193px;width:1px;height:22px;background:#cdd3e0;"></div>
<div style="left:593px;top:193px;width:1px;height:22px;background:#f1f3f8;"></div>
<div class="t" style="left:595.59px;top:194px;font-size:16px;color:#3e4a68;line-height:21px;height:21px;transform:scaleX(1.0811);transform-origin:0 50%;-webkit-text-stroke:0.2px;">Termin ...</div>
<div style="left:672px;top:193px;width:1px;height:22px;background:#cdd3e0;"></div>
<div style="left:673px;top:193px;width:1px;height:22px;background:#f1f3f8;"></div>
<div class="t" style="left:674.76px;top:194px;font-size:16px;color:#3e4a68;line-height:21px;height:21px;transform:scaleX(1.1813);transform-origin:0 50%;-webkit-text-stroke:0.2px;">Ty...</div>
<div style="left:712px;top:193px;width:1px;height:22px;background:#cdd3e0;"></div>
<div style="left:713px;top:193px;width:1px;height:22px;background:#f1f3f8;"></div>
<div class="t" style="left:715.60px;top:194px;font-size:16px;color:#3e4a68;line-height:21px;height:21px;transform:scaleX(0.9970);transform-origin:0 50%;-webkit-text-stroke:0.2px;">Wartość...</div>
<div style="left:792px;top:193px;width:1px;height:22px;background:#cdd3e0;"></div>
<div style="left:793px;top:193px;width:1px;height:22px;background:#f1f3f8;"></div>
<div class="t" style="left:793.71px;top:194px;font-size:16px;color:#3e4a68;line-height:21px;height:21px;transform:scaleX(1.0324);transform-origin:0 50%;-webkit-text-stroke:0.2px;">Uwagi</div>
<div style="left:884px;top:193px;width:1px;height:22px;background:#cdd3e0;"></div>
<div style="left:885px;top:193px;width:1px;height:22px;background:#f1f3f8;"></div>
<div class="t" style="left:886.48px;top:194px;font-size:16px;color:#3e4a68;line-height:21px;height:21px;transform:scaleX(0.9632);transform-origin:0 50%;-webkit-text-stroke:0.2px;">Status</div>
<div style="left:969px;top:193px;width:1px;height:22px;background:#cdd3e0;"></div>
<div style="left:970px;top:193px;width:1px;height:22px;background:#f1f3f8;"></div>
<div class="t" style="left:971.79px;top:194px;font-size:16px;color:#3e4a68;line-height:21px;height:21px;transform:scaleX(1.0239);transform-origin:0 50%;-webkit-text-stroke:0.2px;">Zrealizow...</div>
<div style="left:1062px;top:193px;width:1px;height:22px;background:#cdd3e0;"></div>
<div style="left:1063px;top:193px;width:1px;height:22px;background:#f1f3f8;"></div>
<div class="t" style="left:1064.94px;top:194px;font-size:16px;color:#3e4a68;line-height:21px;height:21px;transform:scaleX(1.0074);transform-origin:0 50%;-webkit-text-stroke:0.2px;">Utworzony przez</div>
<div style="left:1212px;top:193px;width:1px;height:22px;background:#cdd3e0;"></div>
<div style="left:1213px;top:193px;width:1px;height:22px;background:#f1f3f8;"></div>
<div class="t" style="left:1214.72px;top:194px;font-size:16px;color:#3e4a68;line-height:21px;height:21px;transform:scaleX(1.0268);transform-origin:0 50%;-webkit-text-stroke:0.2px;">Projekt</div>
<svg style="left:427px;top:201px" width="9" height="5" viewBox="0 0 9 5"><path d="M0 0h9l-4.500 5z" fill="#9aa3b8"/></svg>
<svg style="left:202.5px;top:200px" width="8" height="8" viewBox="0 0 8 8"><path d="M4 .3v7.400M.3 4h7.400M1.400 1.400l5.200 5.200M6.600 1.400l-5.200 5.200" stroke="#1c2030" stroke-width=".85"/></svg>
<div style="left:200px;top:216px;width:1106px;height:23px;background:#eef5ee;"></div>
<div style="left:200px;top:216px;width:13px;height:23px;background:linear-gradient(#e9ecf3,#dce1ec);"></div>
<svg style="left:203.5px;top:224.0px" width="6" height="10" viewBox="0 0 6 10"><circle cx="3" cy="2.600" r="2.500" fill="#15181f"/><circle cx="2.300" cy="1.900" r=".8" fill="#fff"/><path d="M3 5v4.500" stroke="#15181f" stroke-width="1.300"/></svg>
<div class="t" style="left:684.36px;top:218px;font-size:16px;color:#74767e;line-height:21px;height:21px;transform:scaleX(1.0366);transform-origin:0 50%;">kliknij aby dodać filtr</div>
<div style="left:200px;top:239px;width:1106px;height:2px;background:linear-gradient(#a3abbd,#c9cfdc);"></div>
<div style="left:213px;top:241px;width:1093px;height:23px;background:#f6f7fa;"></div>
<div style="left:200px;top:241px;width:13px;height:23px;background:linear-gradient(#e6e9f1,#d6dbe7);"></div>
<div class="t" style="left:214.68px;top:243px;font-size:16px;color:#0b1434;line-height:21px;height:21px;transform:scaleX(1.0462);transform-origin:0 50%;-webkit-text-stroke:0.2px;">ZD 00027/...</div>
<div class="t" style="left:364.73px;top:243px;font-size:16px;color:#0b1434;line-height:21px;height:21px;transform:scaleX(1.0662);transform-origin:0 50%;-webkit-text-stroke:0.2px;">30.05.2...</div>
<div class="t" style="left:444.28px;top:243px;font-size:16px;color:#0b1434;line-height:21px;height:21px;transform:scaleX(0.9727);transform-origin:0 50%;-webkit-text-stroke:0.2px;">Dostawca 1</div>
<div class="t" style="left:594.43px;top:243px;font-size:16px;color:#0b1434;line-height:21px;height:21px;transform:scaleX(1.0662);transform-origin:0 50%;-webkit-text-stroke:0.2px;">30.05.2...</div>
<div class="t" style="left:692.71px;top:243px;font-size:16px;color:#0b1434;line-height:21px;height:21px;transform:scaleX(1.0585);transform-origin:0 50%;-webkit-text-stroke:0.2px;">22</div>
<div class="t" style="left:726.52px;top:243px;font-size:16px;color:#0b1434;line-height:21px;height:21px;transform:scaleX(1.0349);transform-origin:0 50%;-webkit-text-stroke:0.2px;">2 000,00</div>
<div style="left:889px;top:245px;width:14px;height:14px;background:#0f9a3c;border-radius:50%;"></div>
<svg style="left:892px;top:248px" width="9" height="8" viewBox="0 0 9 8"><path d="M1 4l2.500 2.700 4.500-5.700" fill="none" stroke="#fff" stroke-width="1.800"/></svg>
<div class="t" style="left:907.78px;top:243px;font-size:16px;color:#0b1434;line-height:21px;height:21px;transform:scaleX(1.0418);transform-origin:0 50%;-webkit-text-stroke:0.2px;">Zatwi...</div>
<div style="left:970px;top:241px;width:94px;height:23px;background:linear-gradient(#f1f3f8,#dde1ec);border:1px solid #8b93a8;"></div>
<div class="t" style="left:1002.35px;top:243px;font-size:16px;color:#0b1434;line-height:21px;height:21px;transform:scaleX(1.0558);transform-origin:0 50%;-webkit-text-stroke:0.2px;">0 %</div>
<div class="t" style="left:1066.80px;top:243px;font-size:16px;color:#0b1434;line-height:21px;height:21px;transform:scaleX(1.0244);transform-origin:0 50%;-webkit-text-stroke:0.2px;">Administrator syst...</div>
<div style="left:213px;top:264px;width:1093px;height:23px;background:#edf4ee;"></div>
<div style="left:200px;top:264px;width:13px;height:23px;background:linear-gradient(#dfe3ec,#d3d8e4);"></div>
<div class="t" style="left:214.68px;top:266px;font-size:16px;color:#0b1434;line-height:21px;height:21px;transform:scaleX(1.0462);transform-origin:0 50%;-webkit-text-stroke:0.2px;">ZD 00026/...</div>
<div class="t" style="left:364.60px;top:266px;font-size:16px;color:#0b1434;line-height:21px;height:21px;transform:scaleX(1.0662);transform-origin:0 50%;-webkit-text-stroke:0.2px;">28.05.2...</div>
<div class="t" style="left:444.28px;top:266px;font-size:16px;color:#0b1434;line-height:21px;height:21px;transform:scaleX(0.9727);transform-origin:0 50%;-webkit-text-stroke:0.2px;">Dostawca 3</div>
<div class="t" style="left:594.30px;top:266px;font-size:16px;color:#0b1434;line-height:21px;height:21px;transform:scaleX(1.0662);transform-origin:0 50%;-webkit-text-stroke:0.2px;">28.05.2...</div>
<div class="t" style="left:692.71px;top:266px;font-size:16px;color:#0b1434;line-height:21px;height:21px;transform:scaleX(1.0585);transform-origin:0 50%;-webkit-text-stroke:0.2px;">22</div>
<div class="t" style="left:719.41px;top:266px;font-size:16px;color:#0b1434;line-height:21px;height:21px;transform:scaleX(1.0349);transform-origin:0 50%;-webkit-text-stroke:0.2px;">118 636...</div>
<div style="left:889px;top:268px;width:14px;height:14px;background:#0f9a3c;border-radius:50%;"></div>
<svg style="left:892px;top:271px" width="9" height="8" viewBox="0 0 9 8"><path d="M1 4l2.500 2.700 4.500-5.700" fill="none" stroke="#fff" stroke-width="1.800"/></svg>
<div class="t" style="left:907.78px;top:266px;font-size:16px;color:#0b1434;line-height:21px;height:21px;transform:scaleX(1.0418);transform-origin:0 50%;-webkit-text-stroke:0.2px;">Zatwi...</div>
<div style="left:970px;top:264px;width:94px;height:23px;background:linear-gradient(#f1f3f8,#dde1ec);border:1px solid #8b93a8;"></div>
<div style="left:971px;top:265px;width:92px;height:21px;background:linear-gradient(#c8f5cb 0%,#a2eaaa 33%,#14ca3c 41%,#0cb733 64%,#12c73a 100%);"></div>
<div class="t" style="left:992.71px;top:266px;font-size:16px;color:#0b1434;line-height:21px;height:21px;transform:scaleX(1.0558);transform-origin:0 50%;-webkit-text-stroke:0.2px;">100 %</div>
<div class="t" style="left:1066.80px;top:266px;font-size:16px;color:#0b1434;line-height:21px;height:21px;transform:scaleX(1.0244);transform-origin:0 50%;-webkit-text-stroke:0.2px;">Administrator syst...</div>
<div style="left:213px;top:287px;width:1093px;height:23px;background:linear-gradient(#fbe4a4 0%,#fde7a6 50%,#fde6a3 100%);"></div>
<div style="left:200px;top:287px;width:13px;height:23px;background:linear-gradient(#e6e9f1,#d6dbe7);"></div>
<div class="t" style="left:214.68px;top:289px;font-size:16px;color:#0b1434;line-height:21px;height:21px;transform:scaleX(1.0462);transform-origin:0 50%;-webkit-text-stroke:0.2px;">ZD 00023/...</div>
<div class="t" style="left:364.60px;top:289px;font-size:16px;color:#0b1434;line-height:21px;height:21px;transform:scaleX(1.0662);transform-origin:0 50%;-webkit-text-stroke:0.2px;">27.05.2...</div>
<div class="t" style="left:444.28px;top:289px;font-size:16px;color:#0b1434;line-height:21px;height:21px;transform:scaleX(0.9727);transform-origin:0 50%;-webkit-text-stroke:0.2px;">Dostawca 1</div>
<div class="t" style="left:594.30px;top:289px;font-size:16px;color:#0b1434;line-height:21px;height:21px;transform:scaleX(1.0662);transform-origin:0 50%;-webkit-text-stroke:0.2px;">27.05.2...</div>
<div class="t" style="left:692.71px;top:289px;font-size:16px;color:#0b1434;line-height:21px;height:21px;transform:scaleX(1.0585);transform-origin:0 50%;-webkit-text-stroke:0.2px;">22</div>
<div class="t" style="left:726.52px;top:289px;font-size:16px;color:#0b1434;line-height:21px;height:21px;transform:scaleX(1.0349);transform-origin:0 50%;-webkit-text-stroke:0.2px;">1 800,00</div>
<div style="left:889px;top:291px;width:14px;height:14px;background:#0f9a3c;border-radius:50%;"></div>
<svg style="left:892px;top:294px" width="9" height="8" viewBox="0 0 9 8"><path d="M1 4l2.500 2.700 4.500-5.700" fill="none" stroke="#fff" stroke-width="1.800"/></svg>
<div class="t" style="left:907.78px;top:289px;font-size:16px;color:#0b1434;line-height:21px;height:21px;transform:scaleX(1.0418);transform-origin:0 50%;-webkit-text-stroke:0.2px;">Zatwi...</div>
<div style="left:970px;top:287px;width:94px;height:23px;background:linear-gradient(#f1f3f8,#dde1ec);border:1px solid #8b93a8;"></div>
<div style="left:971px;top:288px;width:92px;height:21px;background:linear-gradient(#c8f5cb 0%,#a2eaaa 33%,#14ca3c 41%,#0cb733 64%,#12c73a 100%);"></div>
<div class="t" style="left:992.71px;top:289px;font-size:16px;color:#0b1434;line-height:21px;height:21px;transform:scaleX(1.0558);transform-origin:0 50%;-webkit-text-stroke:0.2px;">100 %</div>
<div class="t" style="left:1066.80px;top:289px;font-size:16px;color:#0b1434;line-height:21px;height:21px;transform:scaleX(1.0244);transform-origin:0 50%;-webkit-text-stroke:0.2px;">Administrator syst...</div>
<div style="left:213px;top:310px;width:1093px;height:23px;background:#edf4ee;"></div>
<div style="left:200px;top:310px;width:13px;height:23px;background:linear-gradient(#dfe3ec,#d3d8e4);"></div>
<div class="t" style="left:214.68px;top:312px;font-size:16px;color:#0b1434;line-height:21px;height:21px;transform:scaleX(1.0462);transform-origin:0 50%;-webkit-text-stroke:0.2px;">ZD 00024/...</div>
<div class="t" style="left:364.60px;top:312px;font-size:16px;color:#0b1434;line-height:21px;height:21px;transform:scaleX(1.0662);transform-origin:0 50%;-webkit-text-stroke:0.2px;">27.05.2...</div>
<div class="t" style="left:444.28px;top:312px;font-size:16px;color:#0b1434;line-height:21px;height:21px;transform:scaleX(0.9727);transform-origin:0 50%;-webkit-text-stroke:0.2px;">Dostawca 2</div>
<div class="t" style="left:594.30px;top:312px;font-size:16px;color:#0b1434;line-height:21px;height:21px;transform:scaleX(1.0662);transform-origin:0 50%;-webkit-text-stroke:0.2px;">27.05.2...</div>
<div class="t" style="left:692.71px;top:312px;font-size:16px;color:#0b1434;line-height:21px;height:21px;transform:scaleX(1.0585);transform-origin:0 50%;-webkit-text-stroke:0.2px;">22</div>
<div class="t" style="left:717.33px;top:312px;font-size:16px;color:#0b1434;line-height:21px;height:21px;transform:scaleX(1.0349);transform-origin:0 50%;-webkit-text-stroke:0.2px;">10 580,00</div>
<div style="left:889px;top:314px;width:14px;height:14px;background:#0f9a3c;border-radius:50%;"></div>
<svg style="left:892px;top:317px" width="9" height="8" viewBox="0 0 9 8"><path d="M1 4l2.500 2.700 4.500-5.700" fill="none" stroke="#fff" stroke-width="1.800"/></svg>
<div class="t" style="left:907.78px;top:312px;font-size:16px;color:#0b1434;line-height:21px;height:21px;transform:scaleX(1.0418);transform-origin:0 50%;-webkit-text-stroke:0.2px;">Zatwi...</div>
<div style="left:970px;top:310px;width:94px;height:23px;background:linear-gradient(#f1f3f8,#dde1ec);border:1px solid #8b93a8;"></div>
<div style="left:971px;top:311px;width:91px;height:21px;background:linear-gradient(#c8f5cb 0%,#a2eaaa 33%,#14ca3c 41%,#0cb733 64%,#12c73a 100%);"></div>
<div class="t" style="left:997.60px;top:312px;font-size:16px;color:#0b1434;line-height:21px;height:21px;transform:scaleX(1.0558);transform-origin:0 50%;-webkit-text-stroke:0.2px;">99 %</div>
<div class="t" style="left:1066.80px;top:312px;font-size:16px;color:#0b1434;line-height:21px;height:21px;transform:scaleX(1.0244);transform-origin:0 50%;-webkit-text-stroke:0.2px;">Administrator syst...</div>
<div style="left:213px;top:333px;width:1093px;height:23px;background:#f6f7fa;"></div>
<div style="left:200px;top:333px;width:13px;height:23px;background:linear-gradient(#e6e9f1,#d6dbe7);"></div>
<div class="t" style="left:214.68px;top:335px;font-size:16px;color:#0b1434;line-height:21px;height:21px;transform:scaleX(1.0462);transform-origin:0 50%;-webkit-text-stroke:0.2px;">ZD 00025/...</div>
<div class="t" style="left:364.60px;top:335px;font-size:16px;color:#0b1434;line-height:21px;height:21px;transform:scaleX(1.0662);transform-origin:0 50%;-webkit-text-stroke:0.2px;">27.05.2...</div>
<div class="t" style="left:444.28px;top:335px;font-size:16px;color:#0b1434;line-height:21px;height:21px;transform:scaleX(0.9727);transform-origin:0 50%;-webkit-text-stroke:0.2px;">Dostawca z Niemiec</div>
<div class="t" style="left:594.30px;top:335px;font-size:16px;color:#0b1434;line-height:21px;height:21px;transform:scaleX(1.0662);transform-origin:0 50%;-webkit-text-stroke:0.2px;">27.05.2...</div>
<div class="t" style="left:692.71px;top:335px;font-size:16px;color:#0b1434;line-height:21px;height:21px;transform:scaleX(1.0585);transform-origin:0 50%;-webkit-text-stroke:0.2px;">22</div>
<div class="t" style="left:749.54px;top:335px;font-size:16px;color:#0b1434;line-height:21px;height:21px;transform:scaleX(1.0349);transform-origin:0 50%;-webkit-text-stroke:0.2px;">50,00</div>
<div style="left:889px;top:337px;width:14px;height:14px;background:#0f9a3c;border-radius:50%;"></div>
<svg style="left:892px;top:340px" width="9" height="8" viewBox="0 0 9 8"><path d="M1 4l2.500 2.700 4.500-5.700" fill="none" stroke="#fff" stroke-width="1.800"/></svg>
<div class="t" style="left:907.78px;top:335px;font-size:16px;color:#0b1434;line-height:21px;height:21px;transform:scaleX(1.0418);transform-origin:0 50%;-webkit-text-stroke:0.2px;">Zatwi...</div>
<div style="left:970px;top:333px;width:94px;height:23px;background:linear-gradient(#f1f3f8,#dde1ec);border:1px solid #8b93a8;"></div>
<div style="left:971px;top:334px;width:92px;height:21px;background:linear-gradient(#c8f5cb 0%,#a2eaaa 33%,#14ca3c 41%,#0cb733 64%,#12c73a 100%);"></div>
<div class="t" style="left:992.71px;top:335px;font-size:16px;color:#0b1434;line-height:21px;height:21px;transform:scaleX(1.0558);transform-origin:0 50%;-webkit-text-stroke:0.2px;">100 %</div>
<div class="t" style="left:1066.80px;top:335px;font-size:16px;color:#0b1434;line-height:21px;height:21px;transform:scaleX(1.0244);transform-origin:0 50%;-webkit-text-stroke:0.2px;">Administrator syst...</div>
<div style="left:213px;top:356px;width:1093px;height:23px;background:#edf4ee;"></div>
<div style="left:200px;top:356px;width:13px;height:23px;background:linear-gradient(#dfe3ec,#d3d8e4);"></div>
<div class="t" style="left:214.68px;top:358px;font-size:16px;color:#0b1434;line-height:21px;height:21px;transform:scaleX(1.0462);transform-origin:0 50%;-webkit-text-stroke:0.2px;">ZD 00020/...</div>
<div class="t" style="left:364.60px;top:358px;font-size:16px;color:#0b1434;line-height:21px;height:21px;transform:scaleX(1.0662);transform-origin:0 50%;-webkit-text-stroke:0.2px;">22.05.2...</div>
<div class="t" style="left:444.28px;top:358px;font-size:16px;color:#0b1434;line-height:21px;height:21px;transform:scaleX(0.9727);transform-origin:0 50%;-webkit-text-stroke:0.2px;">Dostawca 1</div>
<div class="t" style="left:594.30px;top:358px;font-size:16px;color:#0b1434;line-height:21px;height:21px;transform:scaleX(1.0662);transform-origin:0 50%;-webkit-text-stroke:0.2px;">22.05.2...</div>
<div class="t" style="left:692.71px;top:358px;font-size:16px;color:#0b1434;line-height:21px;height:21px;transform:scaleX(1.0585);transform-origin:0 50%;-webkit-text-stroke:0.2px;">21</div>
<div class="t" style="left:717.33px;top:358px;font-size:16px;color:#0b1434;line-height:21px;height:21px;transform:scaleX(1.0349);transform-origin:0 50%;-webkit-text-stroke:0.2px;">12 000,00</div>
<div style="left:889px;top:360px;width:14px;height:14px;background:#0f9a3c;border-radius:50%;"></div>
<svg style="left:892px;top:363px" width="9" height="8" viewBox="0 0 9 8"><path d="M1 4l2.500 2.700 4.500-5.700" fill="none" stroke="#fff" stroke-width="1.800"/></svg>
<div class="t" style="left:907.78px;top:358px;font-size:16px;color:#0b1434;line-height:21px;height:21px;transform:scaleX(1.0418);transform-origin:0 50%;-webkit-text-stroke:0.2px;">Zatwi...</div>
<div style="left:970px;top:356px;width:94px;height:23px;background:linear-gradient(#f1f3f8,#dde1ec);border:1px solid #8b93a8;"></div>
<div style="left:971px;top:357px;width:92px;height:21px;background:linear-gradient(#c8f5cb 0%,#a2eaaa 33%,#14ca3c 41%,#0cb733 64%,#12c73a 100%);"></div>
<div class="t" style="left:992.71px;top:358px;font-size:16px;color:#0b1434;line-height:21px;height:21px;transform:scaleX(1.0558);transform-origin:0 50%;-webkit-text-stroke:0.2px;">100 %</div>
<div class="t" style="left:1066.80px;top:358px;font-size:16px;color:#0b1434;line-height:21px;height:21px;transform:scaleX(1.0244);transform-origin:0 50%;-webkit-text-stroke:0.2px;">Administrator syst...</div>
<div style="left:213px;top:379px;width:1093px;height:23px;background:#f6f7fa;"></div>
<div style="left:200px;top:379px;width:13px;height:23px;background:linear-gradient(#e6e9f1,#d6dbe7);"></div>
<div class="t" style="left:214.68px;top:381px;font-size:16px;color:#0b1434;line-height:21px;height:21px;transform:scaleX(1.0462);transform-origin:0 50%;-webkit-text-stroke:0.2px;">ZD 00021/...</div>
<div class="t" style="left:364.60px;top:381px;font-size:16px;color:#0b1434;line-height:21px;height:21px;transform:scaleX(1.0662);transform-origin:0 50%;-webkit-text-stroke:0.2px;">22.05.2...</div>
<div class="t" style="left:444.28px;top:381px;font-size:16px;color:#0b1434;line-height:21px;height:21px;transform:scaleX(0.9727);transform-origin:0 50%;-webkit-text-stroke:0.2px;">Dostawca 1</div>
<div class="t" style="left:594.30px;top:381px;font-size:16px;color:#0b1434;line-height:21px;height:21px;transform:scaleX(1.0662);transform-origin:0 50%;-webkit-text-stroke:0.2px;">22.05.2...</div>
<div class="t" style="left:692.71px;top:381px;font-size:16px;color:#0b1434;line-height:21px;height:21px;transform:scaleX(1.0585);transform-origin:0 50%;-webkit-text-stroke:0.2px;">21</div>
<div class="t" style="left:726.52px;top:381px;font-size:16px;color:#0b1434;line-height:21px;height:21px;transform:scaleX(1.0349);transform-origin:0 50%;-webkit-text-stroke:0.2px;">2 200,00</div>
<div style="left:889px;top:383px;width:14px;height:14px;background:#0f9a3c;border-radius:50%;"></div>
<svg style="left:892px;top:386px" width="9" height="8" viewBox="0 0 9 8"><path d="M1 4l2.500 2.700 4.500-5.700" fill="none" stroke="#fff" stroke-width="1.800"/></svg>
<div class="t" style="left:907.78px;top:381px;font-size:16px;color:#0b1434;line-height:21px;height:21px;transform:scaleX(1.0418);transform-origin:0 50%;-webkit-text-stroke:0.2px;">Zatwi...</div>
<div style="left:970px;top:379px;width:94px;height:23px;background:linear-gradient(#f1f3f8,#dde1ec);border:1px solid #8b93a8;"></div>
<div style="left:971px;top:380px;width:92px;height:21px;background:linear-gradient(#c8f5cb 0%,#a2eaaa 33%,#14ca3c 41%,#0cb733 64%,#12c73a 100%);"></div>
<div class="t" style="left:992.71px;top:381px;font-size:16px;color:#0b1434;line-height:21px;height:21px;transform:scaleX(1.0558);transform-origin:0 50%;-webkit-text-stroke:0.2px;">100 %</div>
<div class="t" style="left:1066.80px;top:381px;font-size:16px;color:#0b1434;line-height:21px;height:21px;transform:scaleX(1.0244);transform-origin:0 50%;-webkit-text-stroke:0.2px;">Administrator syst...</div>
<div style="left:213px;top:402px;width:1093px;height:23px;background:#edf4ee;"></div>
<div style="left:200px;top:402px;width:13px;height:23px;background:linear-gradient(#dfe3ec,#d3d8e4);"></div>
<div class="t" style="left:214.68px;top:404px;font-size:16px;color:#0b1434;line-height:21px;height:21px;transform:scaleX(1.0462);transform-origin:0 50%;-webkit-text-stroke:0.2px;">ZD 00022/...</div>
<div class="t" style="left:364.60px;top:404px;font-size:16px;color:#0b1434;line-height:21px;height:21px;transform:scaleX(1.0662);transform-origin:0 50%;-webkit-text-stroke:0.2px;">22.05.2...</div>
<div class="t" style="left:444.28px;top:404px;font-size:16px;color:#0b1434;line-height:21px;height:21px;transform:scaleX(0.9727);transform-origin:0 50%;-webkit-text-stroke:0.2px;">Dostawca 4</div>
<div class="t" style="left:594.30px;top:404px;font-size:16px;color:#0b1434;line-height:21px;height:21px;transform:scaleX(1.0662);transform-origin:0 50%;-webkit-text-stroke:0.2px;">22.05.2...</div>
<div class="t" style="left:692.71px;top:404px;font-size:16px;color:#0b1434;line-height:21px;height:21px;transform:scaleX(1.0585);transform-origin:0 50%;-webkit-text-stroke:0.2px;">21</div>
<div class="t" style="left:758.74px;top:404px;font-size:16px;color:#0b1434;line-height:21px;height:21px;transform:scaleX(1.0349);transform-origin:0 50%;-webkit-text-stroke:0.2px;">0,00</div>
<div style="left:889px;top:406px;width:14px;height:14px;background:#0f9a3c;border-radius:50%;"></div>
<svg style="left:892px;top:409px" width="9" height="8" viewBox="0 0 9 8"><path d="M1 4l2.500 2.700 4.500-5.700" fill="none" stroke="#fff" stroke-width="1.800"/></svg>
<div class="t" style="left:907.78px;top:404px;font-size:16px;color:#0b1434;line-height:21px;height:21px;transform:scaleX(1.0418);transform-origin:0 50%;-webkit-text-stroke:0.2px;">Zatwi...</div>
<div style="left:970px;top:402px;width:94px;height:23px;background:linear-gradient(#f1f3f8,#dde1ec);border:1px solid #8b93a8;"></div>
<div class="t" style="left:1002.35px;top:404px;font-size:16px;color:#0b1434;line-height:21px;height:21px;transform:scaleX(1.0558);transform-origin:0 50%;-webkit-text-stroke:0.2px;">0 %</div>
<div class="t" style="left:1066.80px;top:404px;font-size:16px;color:#0b1434;line-height:21px;height:21px;transform:scaleX(1.0244);transform-origin:0 50%;-webkit-text-stroke:0.2px;">Administrator syst...</div>
<div style="left:213px;top:425px;width:1093px;height:23px;background:#f6f7fa;"></div>
<div style="left:200px;top:425px;width:13px;height:23px;background:linear-gradient(#e6e9f1,#d6dbe7);"></div>
<div class="t" style="left:214.68px;top:427px;font-size:16px;color:#0b1434;line-height:21px;height:21px;transform:scaleX(1.0462);transform-origin:0 50%;-webkit-text-stroke:0.2px;">ZD 00018/...</div>
<div class="t" style="left:364.60px;top:427px;font-size:16px;color:#0b1434;line-height:21px;height:21px;transform:scaleX(1.0662);transform-origin:0 50%;-webkit-text-stroke:0.2px;">28.04.2...</div>
<div class="t" style="left:444.28px;top:427px;font-size:16px;color:#0b1434;line-height:21px;height:21px;transform:scaleX(0.9727);transform-origin:0 50%;-webkit-text-stroke:0.2px;">Dostawca 1</div>
<div class="t" style="left:594.30px;top:427px;font-size:16px;color:#0b1434;line-height:21px;height:21px;transform:scaleX(1.0662);transform-origin:0 50%;-webkit-text-stroke:0.2px;">28.04.2...</div>
<div class="t" style="left:692.57px;top:427px;font-size:16px;color:#0b1434;line-height:21px;height:21px;transform:scaleX(1.0585);transform-origin:0 50%;-webkit-text-stroke:0.2px;">18</div>
<div class="t" style="left:740.37px;top:427px;font-size:16px;color:#0b1434;line-height:21px;height:21px;transform:scaleX(1.0349);transform-origin:0 50%;-webkit-text-stroke:0.2px;">255,00</div>
<div style="left:889px;top:429px;width:14px;height:14px;background:#0f9a3c;border-radius:50%;"></div>
<svg style="left:892px;top:432px" width="9" height="8" viewBox="0 0 9 8"><path d="M1 4l2.500 2.700 4.500-5.700" fill="none" stroke="#fff" stroke-width="1.800"/></svg>
<div class="t" style="left:907.78px;top:427px;font-size:16px;color:#0b1434;line-height:21px;height:21px;transform:scaleX(1.0418);transform-origin:0 50%;-webkit-text-stroke:0.2px;">Zatwi...</div>
<div style="left:970px;top:425px;width:94px;height:23px;background:linear-gradient(#f1f3f8,#dde1ec);border:1px solid #8b93a8;"></div>
<div style="left:971px;top:426px;width:92px;height:21px;background:linear-gradient(#c8f5cb 0%,#a2eaaa 33%,#14ca3c 41%,#0cb733 64%,#12c73a 100%);"></div>
<div class="t" style="left:992.71px;top:427px;font-size:16px;color:#0b1434;line-height:21px;height:21px;transform:scaleX(1.0558);transform-origin:0 50%;-webkit-text-stroke:0.2px;">100 %</div>
<div class="t" style="left:1066.80px;top:427px;font-size:16px;color:#0b1434;line-height:21px;height:21px;transform:scaleX(1.0244);transform-origin:0 50%;-webkit-text-stroke:0.2px;">Administrator syst...</div>
<div style="left:213px;top:287px;width:1093px;height:1px;border-top:1px dotted #101848;"></div>
<div style="left:213px;top:309px;width:1093px;height:1px;border-top:1px dotted #101848;"></div>
<div style="left:213px;top:287px;width:1px;height:23px;border-left:1px dotted #101848;"></div>
<svg style="left:205px;top:294px" width="5" height="9" viewBox="0 0 5 9"><path d="M0 0l5 4.500-5 4.500z" fill="#1a2030"/></svg>
<div style="left:200px;top:448px;width:1106px;height:1px;background:#c9cfdc;"></div>
<div style="left:200px;top:449px;width:1106px;height:40px;background:linear-gradient(#eef0f4 0%,#e8ebf1 48%,#e0e4ec 54%,#dde1ea 100%);"></div>
<div style="left:215px;top:452px;width:96px;height:33px;background:#fff;border:1px solid #d3d8e2;border-radius:2px;"></div>
<div class="t" style="left:226.84px;top:459px;font-size:16px;color:#0b1434;line-height:21px;height:21px;transform:scaleX(1.0169);transform-origin:0 50%;-webkit-text-stroke:0.2px;">26 rekordó</div>
<div style="left:365px;top:452px;width:75px;height:33px;background:#fff;border:1px solid #d3d8e2;border-radius:2px;"></div>
<div style="left:370px;top:455px;width:66.5px;height:27px;overflow:hidden;"><div class="t" style="left:6.62px;top:4px;font-size:16px;color:#0b1434;line-height:21px;height:21px;transform:scaleX(1.0462);transform-origin:0 50%;-webkit-text-stroke:0.2px;">26 pozyc</div></div>
<div style="left:200px;top:489px;width:1106px;height:15px;background:#eaebef;"></div>
<div style="left:218px;top:490px;width:668px;height:13px;background:linear-gradient(#f2f4f8,#d5dbe7);border:1px solid #a9b2c4;border-radius:2px;"></div>
<svg style="left:206px;top:493px" width="4" height="7" viewBox="0 0 4 7"><path d="M4 0v7l-4-3.500z" fill="#8c95a9"/></svg>
<svg style="left:1296px;top:493px" width="4" height="7" viewBox="0 0 4 7"><path d="M0 0v7l4-3.500z" fill="#8c95a9"/></svg>
<div style="left:1306px;top:150px;width:17px;height:339px;background:#eaebef;border-left:1px solid #d6dae4;"></div>
<div style="left:1323px;top:150px;width:1px;height:354px;background:#bfcadc;"></div>
<div style="left:1308px;top:168px;width:14px;height:104px;background:linear-gradient(90deg,#f2f4f8,#d5dbe7);border:1px solid #a9b2c4;border-radius:2px;"></div>
<svg style="left:1311px;top:156px" width="7" height="4" viewBox="0 0 7 4"><path d="M0 4h7l-3.500-4z" fill="#8c95a9"/></svg>
<svg style="left:1311px;top:478px" width="7" height="4" viewBox="0 0 7 4"><path d="M0 0h7l-3.500 4z" fill="#8c95a9"/></svg>
<div style="left:1311px;top:215px;width:8px;height:1px;background:#6e788e;"></div>
<div style="left:1311px;top:217px;width:8px;height:1px;background:#6e788e;"></div>
<div style="left:1311px;top:219px;width:8px;height:1px;background:#6e788e;"></div>
<div style="left:1311px;top:221px;width:8px;height:1px;background:#6e788e;"></div>
<div style="left:1306px;top:489px;width:17px;height:15px;background:#bbc6d9;"></div>
<div style="left:1324px;top:87px;width:1px;height:663px;background:#98a5bb;"></div>
<div class="t" style="left:560px;top:507px;font-size:10px;color:#2c3040;line-height:13px;height:13px;width:400px;text-align:center;font-family:Liberation Mono,monospace;letter-spacing:2.65px;">UKRYJ SZCZEGÓŁY [F8]</div>
<div style="left:756px;top:525px;width:2px;height:1px;background:#7b86a0;"></div>
<div style="left:760px;top:525px;width:2px;height:1px;background:#7b86a0;"></div>
<div style="left:764px;top:525px;width:2px;height:1px;background:#7b86a0;"></div>
<div style="left:768px;top:525px;width:2px;height:1px;background:#7b86a0;"></div>
<div style="left:206px;top:530px;width:81px;height:26px;background:linear-gradient(#eef1f6,#dde2ec);border:1px solid #a5aebf;border-bottom:none;border-radius:3px 3px 0 0;"></div><div class="t" style="left:236.10px;top:536px;font-size:11px;color:#14182a;line-height:14px;height:14px;transform:scaleX(1.0375);transform-origin:0 50%;">Atrybuty</div>
<div style="left:289px;top:530px;width:98px;height:26px;background:linear-gradient(#eef1f6,#dde2ec);border:1px solid #a5aebf;border-bottom:none;border-radius:3px 3px 0 0;"></div><div class="t" style="left:318.51px;top:536px;font-size:11px;color:#14182a;line-height:14px;height:14px;transform:scaleX(0.9712);transform-origin:0 50%;">Specyfikacja</div>
<div style="left:541px;top:530px;width:80px;height:26px;background:linear-gradient(#eef1f6,#dde2ec);border:1px solid #a5aebf;border-bottom:none;border-radius:3px 3px 0 0;"></div><div class="t" style="left:566.14px;top:536px;font-size:11px;color:#14182a;line-height:14px;height:14px;transform:scaleX(0.9565);transform-origin:0 50%;">Załączniki</div>
<div style="left:389px;top:530px;width:149px;height:26px;background:linear-gradient(#fefaf0 0%,#fdf3d6 45%,#fde9ab 55%,#fde7a2 100%);border:1px solid #d3c79f;border-bottom:none;border-radius:3px 3px 0 0;"></div><div class="t" style="left:417.95px;top:536px;font-size:11px;color:#14182a;line-height:14px;height:14px;transform:scaleX(0.9737);transform-origin:0 50%;">Dokumenty powiązane</div>
<div style="left:214px;top:535px;width:16px;height:16px;background:#1fb6d6;border-radius:50%;"></div>
<div class="t" style="left:214px;top:535px;font-size:13px;color:#fff;line-height:16px;height:16px;width:16px;text-align:center;font-weight:bold;">?</div>
<svg style="left:297px;top:535px" width="16" height="16" viewBox="0 0 16 16"><rect x=".5" y=".5" width="11" height="15" fill="#f1f1f1" stroke="#555"/><path d="M2.500 3.500h7M2.500 6h7M2.500 8.500h7M2.500 12.500h7" stroke="#777" stroke-width="1"/><rect x="13" y="4" width="2.500" height="11" fill="#f0a04a" stroke="#8a5a1a" stroke-width=".6"/><path d="M13 4l1.250-2.500 1.250 2.500z" fill="#555"/></svg>
<svg style="left:397px;top:535px" width="16" height="15" viewBox="0 0 16 15"><path d="M0 1.500h6l1.500 1.500h8.500v11h-16z" fill="#f0a616"/><path d="M0 4h16v10.500h-16z" fill="#fdc21c"/><path d="M0 4h16v10.500z" fill="#f5b018"/></svg>
<svg style="left:549px;top:534px" width="9" height="17" viewBox="0 0 9 17"><path d="M2.500 12.500v-8a2 2 0 0 1 4 0v9.500a3 3 0 0 1-6 0v-9" fill="none" stroke="#555a66" stroke-width="1.100"/><path d="M3.600 5v8" stroke="#4d8fe0" stroke-width="1.100"/></svg>
<div style="left:202px;top:555px;width:1120px;height:182px;background:#bcc7d9;"></div>
<div style="left:199px;top:556px;width:1px;height:184px;background:#98a5bb;"></div>
<div style="left:200px;top:556px;width:1px;height:184px;background:#c3cddf;"></div>
<div style="left:201px;top:556px;width:1px;height:184px;background:#98a5bb;"></div>
<div style="left:1322px;top:556px;width:1px;height:184px;background:#98a5bb;"></div>
<div style="left:1323px;top:556px;width:1px;height:184px;background:#c3cddf;"></div>
<div style="left:1324px;top:556px;width:1px;height:194px;background:#98a5bb;"></div>
<div style="left:202px;top:555px;width:1120px;height:5px;background:#fde7a2;border-radius:3px 3px 0 0;"></div>
<div style="left:202px;top:733px;width:1120px;height:4px;background:#fde7a2;border-radius:0 0 3px 3px;"></div>
<div style="left:200px;top:745px;width:1124px;height:4px;background:#fde7a2;border-radius:0 0 2px 2px;"></div>
<div style="left:756px;top:740px;width:2px;height:1px;background:#7b86a0;"></div>
<div style="left:760px;top:740px;width:2px;height:1px;background:#7b86a0;"></div>
<div style="left:764px;top:740px;width:2px;height:1px;background:#7b86a0;"></div>
<div style="left:768px;top:740px;width:2px;height:1px;background:#7b86a0;"></div>
<div style="left:235px;top:560px;width:1054px;height:25px;background:linear-gradient(#eceff3 0%,#e6e9f0 45%,#dbdfe9 50%,#dde1ea 100%);"></div>
<div style="left:246px;top:562px;width:1px;height:22px;background:#cdd3e0;"></div>
<div style="left:247px;top:562px;width:1px;height:22px;background:#f1f3f8;"></div>
<div class="t" style="left:247.82px;top:563px;font-size:16px;color:#3e4a68;line-height:21px;height:21px;transform:scaleX(1.0235);transform-origin:0 50%;-webkit-text-stroke:0.2px;">Numer</div>
<div style="left:346px;top:562px;width:1px;height:22px;background:#cdd3e0;"></div>
<div style="left:347px;top:562px;width:1px;height:22px;background:#f1f3f8;"></div>
<div class="t" style="left:348.70px;top:563px;font-size:16px;color:#3e4a68;line-height:21px;height:21px;transform:scaleX(0.9363);transform-origin:0 50%;-webkit-text-stroke:0.2px;">Seria</div>
<div style="left:404px;top:562px;width:1px;height:22px;background:#cdd3e0;"></div>
<div style="left:405px;top:562px;width:1px;height:22px;background:#f1f3f8;"></div>
<div class="t" style="left:406.21px;top:563px;font-size:16px;color:#3e4a68;line-height:21px;height:21px;transform:scaleX(1.0292);transform-origin:0 50%;-webkit-text-stroke:0.2px;">Data ...</div>
<div style="left:484px;top:562px;width:1px;height:22px;background:#cdd3e0;"></div>
<div style="left:485px;top:562px;width:1px;height:22px;background:#f1f3f8;"></div>
<div class="t" style="left:486.11px;top:563px;font-size:16px;color:#3e4a68;line-height:21px;height:21px;transform:scaleX(1.0305);transform-origin:0 50%;-webkit-text-stroke:0.2px;">Data ew...</div>
<div style="left:564px;top:562px;width:1px;height:22px;background:#cdd3e0;"></div>
<div style="left:565px;top:562px;width:1px;height:22px;background:#f1f3f8;"></div>
<div class="t" style="left:566.69px;top:563px;font-size:16px;color:#3e4a68;line-height:21px;height:21px;transform:scaleX(0.9496);transform-origin:0 50%;-webkit-text-stroke:0.2px;">Status</div>
<div style="left:666px;top:562px;width:1px;height:22px;background:#cdd3e0;"></div>
<div style="left:667px;top:562px;width:1px;height:22px;background:#f1f3f8;"></div>
<div class="t" style="left:666.97px;top:563px;font-size:16px;color:#3e4a68;line-height:21px;height:21px;transform:scaleX(0.9811);transform-origin:0 50%;-webkit-text-stroke:0.2px;">Rodzaj powiązania</div>
<div style="left:842px;top:562px;width:1px;height:22px;background:#cdd3e0;"></div>
<div style="left:843px;top:562px;width:1px;height:22px;background:#f1f3f8;"></div>
<div class="t" style="left:844.10px;top:563px;font-size:16px;color:#3e4a68;line-height:21px;height:21px;transform:scaleX(1.0106);transform-origin:0 50%;-webkit-text-stroke:0.2px;">Wartość ( ceny...</div>
<div style="left:970px;top:562px;width:1px;height:22px;background:#cdd3e0;"></div>
<div style="left:971px;top:562px;width:1px;height:22px;background:#f1f3f8;"></div>
<div class="t" style="left:972.00px;top:563px;font-size:16px;color:#3e4a68;line-height:21px;height:21px;transform:scaleX(0.9877);transform-origin:0 50%;-webkit-text-stroke:0.2px;">Wartość netto</div>
<div style="left:1089px;top:562px;width:1px;height:22px;background:#cdd3e0;"></div>
<div style="left:1090px;top:562px;width:1px;height:22px;background:#f1f3f8;"></div>
<div class="t" style="left:1091.50px;top:563px;font-size:16px;color:#3e4a68;line-height:21px;height:21px;transform:scaleX(0.9989);transform-origin:0 50%;-webkit-text-stroke:0.2px;">Wartość VAT</div>
<div style="left:1199px;top:562px;width:1px;height:22px;background:#cdd3e0;"></div>
<div style="left:1200px;top:562px;width:1px;height:22px;background:#f1f3f8;"></div>
<div style="left:1200px;top:561px;width:89px;height:23px;overflow:hidden;"><div class="t" style="left:1.50px;top:2px;font-size:16px;color:#3e4a68;line-height:21px;height:21px;transform:scaleX(0.9877);transform-origin:0 50%;-webkit-text-stroke:0.2px;">Wartość brutto</div></div>
<svg style="left:468px;top:571px" width="9" height="5" viewBox="0 0 9 5"><path d="M0 5h9l-4.500-5z" fill="#9aa3b8"/></svg>
<svg style="left:236.5px;top:569px" width="8" height="8" viewBox="0 0 8 8"><path d="M4 .3v7.400M.3 4h7.400M1.400 1.400l5.200 5.200M6.600 1.400l-5.200 5.200" stroke="#1c2030" stroke-width=".85"/></svg>
<div style="left:235px;top:585px;width:1054px;height:23px;background:#eef5ee;"></div>
<div style="left:235px;top:585px;width:12px;height:23px;background:linear-gradient(#e9ecf3,#dce1ec);"></div>
<svg style="left:237.5px;top:593.0px" width="6" height="10" viewBox="0 0 6 10"><circle cx="3" cy="2.600" r="2.500" fill="#15181f"/><circle cx="2.300" cy="1.900" r=".8" fill="#fff"/><path d="M3 5v4.500" stroke="#15181f" stroke-width="1.300"/></svg>
<div class="t" style="left:693.46px;top:587px;font-size:16px;color:#74767e;line-height:21px;height:21px;transform:scaleX(1.0359);transform-origin:0 50%;">kliknij aby dodać filtr</div>
<div style="left:235px;top:608px;width:1054px;height:2px;background:linear-gradient(#a3abbd,#c9cfdc);"></div>
<div style="left:235px;top:610px;width:1054px;height:66px;background:#fff;"></div>
<div style="left:247px;top:611px;width:1042px;height:23px;background:#fdf3dc;"></div>
<div style="left:235px;top:611px;width:12px;height:23px;background:linear-gradient(#e6e9f1,#d6dbe7);"></div>
<svg style="left:239px;top:618px" width="5" height="9" viewBox="0 0 5 9"><path d="M0 0l5 4.500-5 4.500z" fill="#1a2030"/></svg>
<div class="t" style="left:247.80px;top:612px;font-size:16px;color:#0b1434;line-height:21px;height:21px;transform:scaleX(1.0437);transform-origin:0 50%;-webkit-text-stroke:0.2px;">PZ 00029/...</div>
<div class="t" style="left:406.70px;top:612px;font-size:16px;color:#0b1434;line-height:21px;height:21px;transform:scaleX(1.0636);transform-origin:0 50%;-webkit-text-stroke:0.2px;">27.05.2...</div>
<div class="t" style="left:486.60px;top:612px;font-size:16px;color:#0b1434;line-height:21px;height:21px;transform:scaleX(1.0636);transform-origin:0 50%;-webkit-text-stroke:0.2px;">27.05.2...</div>
<svg style="left:568.5px;top:614.5px" width="15" height="14" viewBox="0 0 15 14"><path d="M.5 13V.5h4.800l1.200 1.800h6v2.700" fill="#5a5f6b"/><path d="M.5 13.500l2.400-9h12l-2.600 9z" fill="#fba91c"/></svg>
<div class="t" style="left:587.05px;top:612px;font-size:16px;color:#0b1434;line-height:21px;height:21px;transform:scaleX(0.9993);transform-origin:0 50%;-webkit-text-stroke:0.2px;">Brudnopis</div>
<svg style="left:670px;top:614.500px" width="14" height="14" viewBox="0 0 14 14"><path d="M3.500 4.500v-3.500h7l3 3v9.500h-10v-3.500" fill="#fdf8ea" stroke="#5a6170" stroke-width="1"/><path d="M10.500 1v3h3" fill="none" stroke="#5a6170" stroke-width="1"/><path d="M9 7.500h-8M4 4.500l-3 3 3 3" fill="none" stroke="#13a03a" stroke-width="1.600"/></svg>
<div class="t" style="left:687.85px;top:612px;font-size:16px;color:#0b1434;line-height:21px;height:21px;transform:scaleX(1.0039);transform-origin:0 50%;-webkit-text-stroke:0.2px;">Dokument przyjęcia</div>
<div class="t" style="left:926.84px;top:612px;font-size:16px;color:#0b1434;line-height:21px;height:21px;transform:scaleX(1.0351);transform-origin:0 50%;-webkit-text-stroke:0.2px;">1 800</div>
<div class="t" style="left:1045.94px;top:612px;font-size:16px;color:#0b1434;line-height:21px;height:21px;transform:scaleX(1.0351);transform-origin:0 50%;-webkit-text-stroke:0.2px;">1 800</div>
<div class="t" style="left:1188.45px;top:612px;font-size:16px;color:#0b1434;line-height:21px;height:21px;transform:scaleX(1.0351);transform-origin:0 50%;-webkit-text-stroke:0.2px;">0</div>
<div style="left:1260px;top:611px;width:29px;height:23px;overflow:hidden;"><div class="t" style="left:6.04px;top:1px;font-size:16px;color:#0b1434;line-height:21px;height:21px;transform:scaleX(1.0351);transform-origin:0 50%;-webkit-text-stroke:0.2px;">1 800</div></div>
<div style="left:235px;top:676px;width:1054px;height:40px;background:linear-gradient(#eceff4 0%,#e6e9f0 48%,#dfe3ec 52%,#dadfe9 100%);border-top:1px solid #c9cfdc;"></div>
<div style="left:249px;top:679px;width:96px;height:33px;background:#fff;border:1px solid #d3d8e2;border-radius:2px;"></div>
<div class="t" style="left:260.85px;top:686px;font-size:16px;color:#0b1434;line-height:21px;height:21px;transform:scaleX(1.0229);transform-origin:0 50%;-webkit-text-stroke:0.2px;">1 pozycji</div>
<div style="left:235px;top:716px;width:1054px;height:16px;background:#eaebef;"></div>
<div style="left:252px;top:717px;width:958px;height:14px;background:linear-gradient(#f2f4f8 0%,#e4e8f0 50%,#d3d9e6 100%);border:1px solid #a9b2c4;border-radius:2px;"></div>
<svg style="left:241px;top:720px" width="4" height="7" viewBox="0 0 4 7"><path d="M4 0v7l-4-3.500z" fill="#8c95a9"/></svg>
<svg style="left:1279px;top:720px" width="4" height="7" viewBox="0 0 4 7"><path d="M0 0v7l4-3.500z" fill="#8c95a9"/></svg>
<div style="left:727px;top:720px;width:1px;height:7px;background:#6e788e;"></div>
<div style="left:729px;top:720px;width:1px;height:7px;background:#6e788e;"></div>
<div style="left:731px;top:720px;width:1px;height:7px;background:#6e788e;"></div>
<svg style="left:211px;top:566px" width="16" height="16" viewBox="0 0 16 16"><path d="M2.500 11l8-8 3 3-8 8z" fill="#f7a01d"/><path d="M10.500 3l1.800-1.800 3 3L13.500 6z" fill="#ef5a6a"/><path d="M2.500 11l3 3-4.300 1.300z" fill="#f4f0ea"/><path d="M1.200 15.300l1.300-.4-.9-.9z" fill="#555"/></svg>
<div style="left:212px;top:595px;width:14px;height:14px;background:#e8394f;border-radius:50%;"></div>
<svg style="left:214.500px;top:597.500px" width="9" height="9" viewBox="0 0 9 9"><path d="M1 1l7 7M8 1l-7 7" stroke="#fff" stroke-width="1.700"/></svg>
<div style="left:212px;top:623px;width:14px;height:14px;background:#0f7bf2;border-radius:50%;"></div>
<div style="left:215px;top:629px;width:8px;height:2px;background:#fff;"></div>
<div style="left:218px;top:626px;width:2px;height:8px;background:#fff;"></div>
<svg style="left:212px;top:651px" width="14" height="13" viewBox="0 0 14 13"><rect x="2.800" y="0" width="8.400" height="4" fill="#8ccbfa"/><rect x="0" y="3" width="14" height="7.700" rx="1.600" fill="#555b67"/><rect x="2.600" y="7.700" width="8.800" height="5.300" fill="#3d98f3"/><rect x="4" y="9.600" width="6" height="1.300" fill="#8ccbfa"/></svg>
<svg style="left:213.500px;top:679px" width="11" height="14" viewBox="0 0 11 14"><path d="M3 6v-2.200a2.500 2.500 0 0 1 5 0v2.200" fill="none" stroke="#a98a5a" stroke-width="1.400"/><rect x=".6" y="5.800" width="9.800" height="7.600" rx="1" fill="#fbb021" stroke="#5f4f86" stroke-width=".8"/><path d="M10 9v4h-4z" fill="#e2921a"/></svg>
<svg style="left:211px;top:707px" width="17" height="16" viewBox="0 0 17 16"><rect x=".5" y="1.500" width="12" height="10.500" fill="#d6dbe6" stroke="#5a6378" stroke-width="1"/><rect x="2.300" y="3.300" width="1.800" height="7" fill="#8d95a8"/><rect x="8.900" y="3.300" width="1.800" height="5" fill="#8d95a8"/><rect x="4.900" y=".3" width="3.200" height="13" fill="#3aaa4c"/><circle cx="12.600" cy="12" r="3.700" fill="#22a53f"/><path d="M10.500 12h4.200M12.600 9.900v4.200" stroke="#fff" stroke-width="1.400"/></svg>
<svg style="left:1298px;top:566px" width="12" height="13" viewBox="0 0 12 13"><g fill="none" stroke="#3a7de0" stroke-width="1"><circle cx="1.800" cy="1.800" r="1.300"/><circle cx="1.800" cy="6.500" r="1.300"/><circle cx="1.800" cy="11.200" r="1.300"/></g><path d="M5 1.800h7M5 4.200h7M5 6.500h7M5 8.800h7M5 11.200h7" stroke="#444b5c" stroke-width="1.100"/></svg>
<div style="left:200px;top:286px;width:1108px;height:25px;border-radius:4px;box-shadow:inset 0 2px 4px rgba(60,50,30,.38),inset -2px 0 3px rgba(60,50,30,.2),inset 2px 0 3px rgba(60,50,30,.15),0 2px 3px rgba(0,0,0,.2);"></div><svg style="left:0;top:0" width="1333" height="775"><rect x="200.30" y="286.30" width="1108.40" height="25.00" rx="4" fill="none" stroke="#f80c12" stroke-width="2"/></svg>
<div style="left:466px;top:89px;width:45px;height:45px;border-radius:6px;box-shadow:inset 0 2px 4px rgba(60,50,30,.38),inset -2px 0 3px rgba(60,50,30,.2),inset 2px 0 3px rgba(60,50,30,.15),0 2px 3px rgba(0,0,0,.2);background:rgba(90,100,130,.10);"></div><svg style="left:0;top:0" width="1333" height="775"><rect x="465.90" y="88.60" width="45.10" height="44.70" rx="6" fill="none" stroke="#f80c12" stroke-width="2"/></svg>
<div style="left:389px;top:527px;width:149px;height:32px;border-radius:5px;box-shadow:inset 0 2px 4px rgba(60,50,30,.38),inset -2px 0 3px rgba(60,50,30,.2),inset 2px 0 3px rgba(60,50,30,.15),0 2px 3px rgba(0,0,0,.2);"></div><svg style="left:0;top:0" width="1333" height="775"><rect x="389.00" y="526.60" width="148.60" height="32.20" rx="5" fill="none" stroke="#f80c12" stroke-width="2"/></svg>
<div style="left:237px;top:610px;width:1054px;height:25px;border-radius:4px;box-shadow:inset 0 2px 4px rgba(60,50,30,.38),inset -2px 0 3px rgba(60,50,30,.2),inset 2px 0 3px rgba(60,50,30,.15),0 2px 3px rgba(0,0,0,.2);"></div><svg style="left:0;top:0" width="1333" height="775"><rect x="236.90" y="610.40" width="1053.60" height="25.40" rx="4" fill="none" stroke="#f80c12" stroke-width="2"/></svg>
<svg style="left:0;top:0;filter:drop-shadow(0 2px 3px rgba(0,0,0,.32));" width="1333" height="775"><path d="M151.0 339.0L190.5 314.0" stroke="#f80c12" stroke-width="2"/><path d="M201.5 307.0L194.0 319.4L187.0 308.5z" fill="#f80c12"/></svg>
<svg style="left:0;top:0;filter:drop-shadow(0 2px 3px rgba(0,0,0,.32));" width="1333" height="775"><path d="M547.5 159.0L521.1 140.1" stroke="#f80c12" stroke-width="2"/><path d="M510.5 132.5L524.9 134.8L517.3 145.4z" fill="#f80c12"/></svg>
<div style="left:125.0px;top:332.0px;width:29.0px;height:29.0px;background:#b90d16;border:2px solid #f80c12;border-radius:50%;box-shadow:0 2px 5px rgba(0,0,0,.45);"></div><div class="t" style="left:125.0px;top:332.0px;font-size:15px;color:#fff;line-height:29.0px;height:29.0px;width:29.0px;text-align:center;">1</div>
<div style="left:544.0px;top:154.0px;width:29.0px;height:29.0px;background:#d62a31;border:2px solid #f80c12;border-radius:50%;box-shadow:0 2px 5px rgba(0,0,0,.45);"></div><div class="t" style="left:544.0px;top:154.0px;font-size:15px;color:#fff;line-height:29.0px;height:29.0px;width:29.0px;text-align:center;">2</div>
<svg style="left:0;top:0;filter:drop-shadow(0 2px 3px rgba(0,0,0,.32));" width="1333" height="775"><path d="M531 470L439.500 523.500L552 499z" fill="#ee1419"/><rect x="531" y="448" width="302" height="59" rx="14" fill="#ee1419"/></svg>
<div class="t" style="left:544.89px;top:455px;font-size:18.67px;color:#fff;line-height:24px;height:24px;transform:scaleX(1.0046);transform-origin:0 50%;">Możliwość sprawdzenia istnienia</div>
<div class="t" style="left:571.85px;top:476px;font-size:18.67px;color:#fff;line-height:24px;height:24px;transform:scaleX(1.0048);transform-origin:0 50%;">dokumentów powiązanych</div>
</body></html>
